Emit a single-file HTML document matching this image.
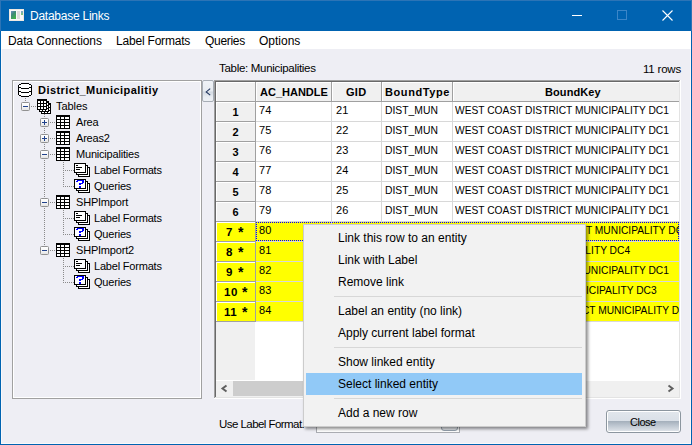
<!DOCTYPE html><html><head><meta charset="utf-8"><style>
*{margin:0;padding:0;box-sizing:border-box}
html,body{width:692px;height:445px;overflow:hidden;background:#EEEEF4;font-family:"Liberation Sans",sans-serif;color:#000;position:relative}
.a{position:absolute;white-space:nowrap}
.ln{position:absolute}
svg{position:absolute;overflow:visible}
</style></head><body>
<div class="ln" style="left:0px;top:0px;width:692px;height:31px;background:#0063B1;"></div>
<div class="ln" style="left:0px;top:0px;width:1px;height:445px;background:#0063B1;"></div>
<div class="ln" style="left:691px;top:0px;width:1px;height:445px;background:#0063B1;"></div>
<div class="ln" style="left:0px;top:444px;width:692px;height:1px;background:#0063B1;"></div>
<div class="ln" style="left:1px;top:31px;width:690px;height:18px;background:#FFFFFF;"></div>
<div class="ln" style="left:0px;top:0px;width:692px;height:1px;background:#2C74B6;"></div>
<div class="ln" style="left:0px;top:0px;width:1px;height:31px;background:#2C74B6;"></div>
<div class="ln" style="left:691px;top:0px;width:1px;height:31px;background:#2C74B6;"></div>
<div class="ln" style="left:1px;top:49px;width:1px;height:394px;background:#F9F8FA;"></div>
<div class="ln" style="left:690px;top:49px;width:1px;height:394px;background:#F9F8FA;"></div>
<div class="ln" style="left:1px;top:443px;width:690px;height:1px;background:#F9F8FA;"></div>
<svg style="left:9px;top:9px" width="15" height="12" viewBox="0 0 15 12">
<defs><linearGradient id="g1" x1="0" y1="0" x2="0.6" y2="1"><stop offset="0" stop-color="#6F8FC4"/><stop offset="0.45" stop-color="#3E8A78"/><stop offset="1" stop-color="#3DAF4A"/></linearGradient>
<linearGradient id="g2" x1="0" y1="0" x2="0" y2="1"><stop offset="0" stop-color="#7FA0D6"/><stop offset="1" stop-color="#7CCB6E"/></linearGradient></defs>
<rect x="0" y="0" width="15" height="12" fill="#EDE8E2"/>
<rect x="1" y="1" width="13" height="10" fill="#F8F8F8"/>
<rect x="2" y="2" width="5" height="8" fill="url(#g1)"/>
<rect x="8" y="2" width="3" height="8" fill="#DCDCDC"/>
<rect x="12" y="2" width="2" height="4" fill="url(#g2)"/>
</svg>
<div class="a" style="left:30px;top:10px;font-size:12px;line-height:12px;font-weight:400;letter-spacing:-0.25px;color:#fff;">Database Links</div>
<div class="ln" style="left:572px;top:15px;width:10px;height:1px;background:#fff;"></div>
<div class="ln" style="left:617px;top:10px;width:10px;height:10px;border:1px solid #3C86C8"></div>
<svg style="left:662px;top:10px" width="11" height="11" viewBox="0 0 11 11"><path d="M0.5 0.5L10.5 10.5M10.5 0.5L0.5 10.5" stroke="#fff" stroke-width="1.1"/></svg>
<div class="a" style="left:8px;top:35px;font-size:12px;line-height:12px;font-weight:400;letter-spacing:-0.1px;color:#000;">Data Connections</div>
<div class="a" style="left:116px;top:35px;font-size:12px;line-height:12px;font-weight:400;letter-spacing:-0.2px;color:#000;">Label Formats</div>
<div class="a" style="left:205px;top:35px;font-size:12px;line-height:12px;font-weight:400;letter-spacing:-0.3px;color:#000;">Queries</div>
<div class="a" style="left:259px;top:35px;font-size:12px;line-height:12px;font-weight:400;letter-spacing:0px;color:#000;">Options</div>
<div class="a" style="left:219px;top:63px;font-size:11.5px;line-height:11.5px;font-weight:400;letter-spacing:-0.3px;color:#000;">Table: Municipalities</div>
<div class="a" style="left:643px;top:64px;font-size:11.5px;line-height:11.5px;font-weight:400;letter-spacing:-0.2px;color:#000;">11 rows</div>
<div class="ln" style="left:12px;top:80px;width:190px;height:319px;border:1px solid #A0A0A0"></div>
<div class="ln" style="left:13px;top:81px;width:188px;height:317px;border:1px solid #FFFFFF"></div>
<div class="ln" style="left:25px;top:98px;width:1px;height:1px;background:#8A8A8A;"></div>
<div class="ln" style="left:25px;top:100px;width:1px;height:1px;background:#8A8A8A;"></div>
<div class="ln" style="left:31px;top:106px;width:1px;height:1px;background:#8A8A8A;"></div>
<div class="ln" style="left:33px;top:106px;width:1px;height:1px;background:#8A8A8A;"></div>
<div class="ln" style="left:35px;top:106px;width:1px;height:1px;background:#8A8A8A;"></div>
<div class="ln" style="left:44px;top:114px;width:1px;height:1px;background:#8A8A8A;"></div>
<div class="ln" style="left:44px;top:116px;width:1px;height:1px;background:#8A8A8A;"></div>
<div class="ln" style="left:44px;top:118px;width:1px;height:1px;background:#8A8A8A;"></div>
<div class="ln" style="left:44px;top:120px;width:1px;height:1px;background:#8A8A8A;"></div>
<div class="ln" style="left:44px;top:122px;width:1px;height:1px;background:#8A8A8A;"></div>
<div class="ln" style="left:44px;top:124px;width:1px;height:1px;background:#8A8A8A;"></div>
<div class="ln" style="left:44px;top:126px;width:1px;height:1px;background:#8A8A8A;"></div>
<div class="ln" style="left:44px;top:128px;width:1px;height:1px;background:#8A8A8A;"></div>
<div class="ln" style="left:44px;top:130px;width:1px;height:1px;background:#8A8A8A;"></div>
<div class="ln" style="left:44px;top:132px;width:1px;height:1px;background:#8A8A8A;"></div>
<div class="ln" style="left:44px;top:134px;width:1px;height:1px;background:#8A8A8A;"></div>
<div class="ln" style="left:44px;top:136px;width:1px;height:1px;background:#8A8A8A;"></div>
<div class="ln" style="left:44px;top:138px;width:1px;height:1px;background:#8A8A8A;"></div>
<div class="ln" style="left:44px;top:140px;width:1px;height:1px;background:#8A8A8A;"></div>
<div class="ln" style="left:44px;top:142px;width:1px;height:1px;background:#8A8A8A;"></div>
<div class="ln" style="left:44px;top:144px;width:1px;height:1px;background:#8A8A8A;"></div>
<div class="ln" style="left:44px;top:146px;width:1px;height:1px;background:#8A8A8A;"></div>
<div class="ln" style="left:44px;top:148px;width:1px;height:1px;background:#8A8A8A;"></div>
<div class="ln" style="left:44px;top:150px;width:1px;height:1px;background:#8A8A8A;"></div>
<div class="ln" style="left:44px;top:152px;width:1px;height:1px;background:#8A8A8A;"></div>
<div class="ln" style="left:44px;top:154px;width:1px;height:1px;background:#8A8A8A;"></div>
<div class="ln" style="left:44px;top:156px;width:1px;height:1px;background:#8A8A8A;"></div>
<div class="ln" style="left:44px;top:158px;width:1px;height:1px;background:#8A8A8A;"></div>
<div class="ln" style="left:44px;top:160px;width:1px;height:1px;background:#8A8A8A;"></div>
<div class="ln" style="left:44px;top:162px;width:1px;height:1px;background:#8A8A8A;"></div>
<div class="ln" style="left:44px;top:164px;width:1px;height:1px;background:#8A8A8A;"></div>
<div class="ln" style="left:44px;top:166px;width:1px;height:1px;background:#8A8A8A;"></div>
<div class="ln" style="left:44px;top:168px;width:1px;height:1px;background:#8A8A8A;"></div>
<div class="ln" style="left:44px;top:170px;width:1px;height:1px;background:#8A8A8A;"></div>
<div class="ln" style="left:44px;top:172px;width:1px;height:1px;background:#8A8A8A;"></div>
<div class="ln" style="left:44px;top:174px;width:1px;height:1px;background:#8A8A8A;"></div>
<div class="ln" style="left:44px;top:176px;width:1px;height:1px;background:#8A8A8A;"></div>
<div class="ln" style="left:44px;top:178px;width:1px;height:1px;background:#8A8A8A;"></div>
<div class="ln" style="left:44px;top:180px;width:1px;height:1px;background:#8A8A8A;"></div>
<div class="ln" style="left:44px;top:182px;width:1px;height:1px;background:#8A8A8A;"></div>
<div class="ln" style="left:44px;top:184px;width:1px;height:1px;background:#8A8A8A;"></div>
<div class="ln" style="left:44px;top:186px;width:1px;height:1px;background:#8A8A8A;"></div>
<div class="ln" style="left:44px;top:188px;width:1px;height:1px;background:#8A8A8A;"></div>
<div class="ln" style="left:44px;top:190px;width:1px;height:1px;background:#8A8A8A;"></div>
<div class="ln" style="left:44px;top:192px;width:1px;height:1px;background:#8A8A8A;"></div>
<div class="ln" style="left:44px;top:194px;width:1px;height:1px;background:#8A8A8A;"></div>
<div class="ln" style="left:44px;top:196px;width:1px;height:1px;background:#8A8A8A;"></div>
<div class="ln" style="left:44px;top:198px;width:1px;height:1px;background:#8A8A8A;"></div>
<div class="ln" style="left:44px;top:200px;width:1px;height:1px;background:#8A8A8A;"></div>
<div class="ln" style="left:44px;top:202px;width:1px;height:1px;background:#8A8A8A;"></div>
<div class="ln" style="left:44px;top:204px;width:1px;height:1px;background:#8A8A8A;"></div>
<div class="ln" style="left:44px;top:206px;width:1px;height:1px;background:#8A8A8A;"></div>
<div class="ln" style="left:44px;top:208px;width:1px;height:1px;background:#8A8A8A;"></div>
<div class="ln" style="left:44px;top:210px;width:1px;height:1px;background:#8A8A8A;"></div>
<div class="ln" style="left:44px;top:212px;width:1px;height:1px;background:#8A8A8A;"></div>
<div class="ln" style="left:44px;top:214px;width:1px;height:1px;background:#8A8A8A;"></div>
<div class="ln" style="left:44px;top:216px;width:1px;height:1px;background:#8A8A8A;"></div>
<div class="ln" style="left:44px;top:218px;width:1px;height:1px;background:#8A8A8A;"></div>
<div class="ln" style="left:44px;top:220px;width:1px;height:1px;background:#8A8A8A;"></div>
<div class="ln" style="left:44px;top:222px;width:1px;height:1px;background:#8A8A8A;"></div>
<div class="ln" style="left:44px;top:224px;width:1px;height:1px;background:#8A8A8A;"></div>
<div class="ln" style="left:44px;top:226px;width:1px;height:1px;background:#8A8A8A;"></div>
<div class="ln" style="left:44px;top:228px;width:1px;height:1px;background:#8A8A8A;"></div>
<div class="ln" style="left:44px;top:230px;width:1px;height:1px;background:#8A8A8A;"></div>
<div class="ln" style="left:44px;top:232px;width:1px;height:1px;background:#8A8A8A;"></div>
<div class="ln" style="left:44px;top:234px;width:1px;height:1px;background:#8A8A8A;"></div>
<div class="ln" style="left:44px;top:236px;width:1px;height:1px;background:#8A8A8A;"></div>
<div class="ln" style="left:44px;top:238px;width:1px;height:1px;background:#8A8A8A;"></div>
<div class="ln" style="left:44px;top:240px;width:1px;height:1px;background:#8A8A8A;"></div>
<div class="ln" style="left:44px;top:242px;width:1px;height:1px;background:#8A8A8A;"></div>
<div class="ln" style="left:44px;top:244px;width:1px;height:1px;background:#8A8A8A;"></div>
<div class="ln" style="left:50px;top:122px;width:1px;height:1px;background:#8A8A8A;"></div>
<div class="ln" style="left:52px;top:122px;width:1px;height:1px;background:#8A8A8A;"></div>
<div class="ln" style="left:54px;top:122px;width:1px;height:1px;background:#8A8A8A;"></div>
<div class="ln" style="left:50px;top:138px;width:1px;height:1px;background:#8A8A8A;"></div>
<div class="ln" style="left:52px;top:138px;width:1px;height:1px;background:#8A8A8A;"></div>
<div class="ln" style="left:54px;top:138px;width:1px;height:1px;background:#8A8A8A;"></div>
<div class="ln" style="left:50px;top:154px;width:1px;height:1px;background:#8A8A8A;"></div>
<div class="ln" style="left:52px;top:154px;width:1px;height:1px;background:#8A8A8A;"></div>
<div class="ln" style="left:54px;top:154px;width:1px;height:1px;background:#8A8A8A;"></div>
<div class="ln" style="left:50px;top:202px;width:1px;height:1px;background:#8A8A8A;"></div>
<div class="ln" style="left:52px;top:202px;width:1px;height:1px;background:#8A8A8A;"></div>
<div class="ln" style="left:54px;top:202px;width:1px;height:1px;background:#8A8A8A;"></div>
<div class="ln" style="left:50px;top:250px;width:1px;height:1px;background:#8A8A8A;"></div>
<div class="ln" style="left:52px;top:250px;width:1px;height:1px;background:#8A8A8A;"></div>
<div class="ln" style="left:54px;top:250px;width:1px;height:1px;background:#8A8A8A;"></div>
<div class="ln" style="left:63px;top:162px;width:1px;height:1px;background:#8A8A8A;"></div>
<div class="ln" style="left:63px;top:164px;width:1px;height:1px;background:#8A8A8A;"></div>
<div class="ln" style="left:63px;top:166px;width:1px;height:1px;background:#8A8A8A;"></div>
<div class="ln" style="left:63px;top:168px;width:1px;height:1px;background:#8A8A8A;"></div>
<div class="ln" style="left:63px;top:170px;width:1px;height:1px;background:#8A8A8A;"></div>
<div class="ln" style="left:63px;top:172px;width:1px;height:1px;background:#8A8A8A;"></div>
<div class="ln" style="left:63px;top:174px;width:1px;height:1px;background:#8A8A8A;"></div>
<div class="ln" style="left:63px;top:176px;width:1px;height:1px;background:#8A8A8A;"></div>
<div class="ln" style="left:63px;top:178px;width:1px;height:1px;background:#8A8A8A;"></div>
<div class="ln" style="left:63px;top:180px;width:1px;height:1px;background:#8A8A8A;"></div>
<div class="ln" style="left:63px;top:182px;width:1px;height:1px;background:#8A8A8A;"></div>
<div class="ln" style="left:63px;top:184px;width:1px;height:1px;background:#8A8A8A;"></div>
<div class="ln" style="left:63px;top:186px;width:1px;height:1px;background:#8A8A8A;"></div>
<div class="ln" style="left:65px;top:170px;width:1px;height:1px;background:#8A8A8A;"></div>
<div class="ln" style="left:65px;top:186px;width:1px;height:1px;background:#8A8A8A;"></div>
<div class="ln" style="left:67px;top:170px;width:1px;height:1px;background:#8A8A8A;"></div>
<div class="ln" style="left:67px;top:186px;width:1px;height:1px;background:#8A8A8A;"></div>
<div class="ln" style="left:69px;top:170px;width:1px;height:1px;background:#8A8A8A;"></div>
<div class="ln" style="left:69px;top:186px;width:1px;height:1px;background:#8A8A8A;"></div>
<div class="ln" style="left:71px;top:170px;width:1px;height:1px;background:#8A8A8A;"></div>
<div class="ln" style="left:71px;top:186px;width:1px;height:1px;background:#8A8A8A;"></div>
<div class="ln" style="left:73px;top:170px;width:1px;height:1px;background:#8A8A8A;"></div>
<div class="ln" style="left:73px;top:186px;width:1px;height:1px;background:#8A8A8A;"></div>
<div class="ln" style="left:63px;top:210px;width:1px;height:1px;background:#8A8A8A;"></div>
<div class="ln" style="left:63px;top:212px;width:1px;height:1px;background:#8A8A8A;"></div>
<div class="ln" style="left:63px;top:214px;width:1px;height:1px;background:#8A8A8A;"></div>
<div class="ln" style="left:63px;top:216px;width:1px;height:1px;background:#8A8A8A;"></div>
<div class="ln" style="left:63px;top:218px;width:1px;height:1px;background:#8A8A8A;"></div>
<div class="ln" style="left:63px;top:220px;width:1px;height:1px;background:#8A8A8A;"></div>
<div class="ln" style="left:63px;top:222px;width:1px;height:1px;background:#8A8A8A;"></div>
<div class="ln" style="left:63px;top:224px;width:1px;height:1px;background:#8A8A8A;"></div>
<div class="ln" style="left:63px;top:226px;width:1px;height:1px;background:#8A8A8A;"></div>
<div class="ln" style="left:63px;top:228px;width:1px;height:1px;background:#8A8A8A;"></div>
<div class="ln" style="left:63px;top:230px;width:1px;height:1px;background:#8A8A8A;"></div>
<div class="ln" style="left:63px;top:232px;width:1px;height:1px;background:#8A8A8A;"></div>
<div class="ln" style="left:63px;top:234px;width:1px;height:1px;background:#8A8A8A;"></div>
<div class="ln" style="left:65px;top:218px;width:1px;height:1px;background:#8A8A8A;"></div>
<div class="ln" style="left:65px;top:234px;width:1px;height:1px;background:#8A8A8A;"></div>
<div class="ln" style="left:67px;top:218px;width:1px;height:1px;background:#8A8A8A;"></div>
<div class="ln" style="left:67px;top:234px;width:1px;height:1px;background:#8A8A8A;"></div>
<div class="ln" style="left:69px;top:218px;width:1px;height:1px;background:#8A8A8A;"></div>
<div class="ln" style="left:69px;top:234px;width:1px;height:1px;background:#8A8A8A;"></div>
<div class="ln" style="left:71px;top:218px;width:1px;height:1px;background:#8A8A8A;"></div>
<div class="ln" style="left:71px;top:234px;width:1px;height:1px;background:#8A8A8A;"></div>
<div class="ln" style="left:73px;top:218px;width:1px;height:1px;background:#8A8A8A;"></div>
<div class="ln" style="left:73px;top:234px;width:1px;height:1px;background:#8A8A8A;"></div>
<div class="ln" style="left:63px;top:258px;width:1px;height:1px;background:#8A8A8A;"></div>
<div class="ln" style="left:63px;top:260px;width:1px;height:1px;background:#8A8A8A;"></div>
<div class="ln" style="left:63px;top:262px;width:1px;height:1px;background:#8A8A8A;"></div>
<div class="ln" style="left:63px;top:264px;width:1px;height:1px;background:#8A8A8A;"></div>
<div class="ln" style="left:63px;top:266px;width:1px;height:1px;background:#8A8A8A;"></div>
<div class="ln" style="left:63px;top:268px;width:1px;height:1px;background:#8A8A8A;"></div>
<div class="ln" style="left:63px;top:270px;width:1px;height:1px;background:#8A8A8A;"></div>
<div class="ln" style="left:63px;top:272px;width:1px;height:1px;background:#8A8A8A;"></div>
<div class="ln" style="left:63px;top:274px;width:1px;height:1px;background:#8A8A8A;"></div>
<div class="ln" style="left:63px;top:276px;width:1px;height:1px;background:#8A8A8A;"></div>
<div class="ln" style="left:63px;top:278px;width:1px;height:1px;background:#8A8A8A;"></div>
<div class="ln" style="left:63px;top:280px;width:1px;height:1px;background:#8A8A8A;"></div>
<div class="ln" style="left:63px;top:282px;width:1px;height:1px;background:#8A8A8A;"></div>
<div class="ln" style="left:65px;top:266px;width:1px;height:1px;background:#8A8A8A;"></div>
<div class="ln" style="left:65px;top:282px;width:1px;height:1px;background:#8A8A8A;"></div>
<div class="ln" style="left:67px;top:266px;width:1px;height:1px;background:#8A8A8A;"></div>
<div class="ln" style="left:67px;top:282px;width:1px;height:1px;background:#8A8A8A;"></div>
<div class="ln" style="left:69px;top:266px;width:1px;height:1px;background:#8A8A8A;"></div>
<div class="ln" style="left:69px;top:282px;width:1px;height:1px;background:#8A8A8A;"></div>
<div class="ln" style="left:71px;top:266px;width:1px;height:1px;background:#8A8A8A;"></div>
<div class="ln" style="left:71px;top:282px;width:1px;height:1px;background:#8A8A8A;"></div>
<div class="ln" style="left:73px;top:266px;width:1px;height:1px;background:#8A8A8A;"></div>
<div class="ln" style="left:73px;top:282px;width:1px;height:1px;background:#8A8A8A;"></div>
<svg style="left:18px;top:83px" width="14" height="14" viewBox="0 0 14 14" shape-rendering="crispEdges"><rect x="3" y="0" width="8" height="1" fill="#000000"/><rect x="1" y="1" width="2" height="1" fill="#000000"/><rect x="3" y="1" width="8" height="1" fill="#FFFFFF"/><rect x="11" y="1" width="2" height="1" fill="#000000"/><rect x="0" y="2" width="1" height="1" fill="#000000"/><rect x="1" y="2" width="12" height="1" fill="#FFFFFF"/><rect x="13" y="2" width="1" height="1" fill="#000000"/><rect x="0" y="3" width="1" height="1" fill="#000000"/><rect x="1" y="3" width="12" height="1" fill="#FFFFFF"/><rect x="13" y="3" width="1" height="1" fill="#000000"/><rect x="0" y="4" width="3" height="1" fill="#000000"/><rect x="3" y="4" width="8" height="1" fill="#FFFFFF"/><rect x="11" y="4" width="3" height="1" fill="#000000"/><rect x="0" y="5" width="1" height="1" fill="#000000"/><rect x="1" y="5" width="2" height="1" fill="#FFFFFF"/><rect x="3" y="5" width="8" height="1" fill="#000000"/><rect x="11" y="5" width="2" height="1" fill="#FFFFFF"/><rect x="13" y="5" width="1" height="1" fill="#000000"/><rect x="0" y="6" width="1" height="1" fill="#000000"/><rect x="1" y="6" width="12" height="1" fill="#FFFFFF"/><rect x="13" y="6" width="1" height="1" fill="#000000"/><rect x="0" y="7" width="1" height="1" fill="#000000"/><rect x="1" y="7" width="12" height="1" fill="#FFFFFF"/><rect x="13" y="7" width="1" height="1" fill="#000000"/><rect x="0" y="8" width="3" height="1" fill="#000000"/><rect x="3" y="8" width="8" height="1" fill="#FFFFFF"/><rect x="11" y="8" width="3" height="1" fill="#000000"/><rect x="0" y="9" width="1" height="1" fill="#000000"/><rect x="1" y="9" width="2" height="1" fill="#FFFFFF"/><rect x="3" y="9" width="8" height="1" fill="#000000"/><rect x="11" y="9" width="2" height="1" fill="#FFFFFF"/><rect x="13" y="9" width="1" height="1" fill="#000000"/><rect x="0" y="10" width="1" height="1" fill="#000000"/><rect x="1" y="10" width="12" height="1" fill="#FFFFFF"/><rect x="13" y="10" width="1" height="1" fill="#000000"/><rect x="0" y="11" width="1" height="1" fill="#000000"/><rect x="1" y="11" width="12" height="1" fill="#FFFFFF"/><rect x="13" y="11" width="1" height="1" fill="#000000"/><rect x="1" y="12" width="2" height="1" fill="#000000"/><rect x="3" y="12" width="8" height="1" fill="#FFFFFF"/><rect x="11" y="12" width="2" height="1" fill="#000000"/><rect x="3" y="13" width="8" height="1" fill="#000000"/></svg>
<div class="a" style="left:38px;top:85px;font-size:11px;line-height:11px;font-weight:700;letter-spacing:0.45px;color:#000;">District_Municipalitiy</div>
<div class="ln" style="left:21px;top:102px;width:9px;height:9px;border:1px solid #919191;border-radius:1.5px;background:linear-gradient(#FFFFFF 0%,#F7F7F7 50%,#E4E4E4 100%)"></div>
<div class="ln" style="left:23px;top:106px;width:5px;height:1px;background:#21428C;"></div>
<svg style="left:37px;top:99px" width="14" height="15" viewBox="0 0 14 15" shape-rendering="crispEdges"><rect x="0" y="0" width="10" height="1" fill="#000000"/><rect x="0" y="1" width="10" height="1" fill="#000000"/><rect x="0" y="2" width="1" height="1" fill="#000000"/><rect x="1" y="2" width="2" height="1" fill="#FFFFFF"/><rect x="3" y="2" width="1" height="1" fill="#000000"/><rect x="4" y="2" width="2" height="1" fill="#FFFFFF"/><rect x="6" y="2" width="1" height="1" fill="#000000"/><rect x="7" y="2" width="2" height="1" fill="#FFFFFF"/><rect x="9" y="2" width="3" height="1" fill="#000000"/><rect x="0" y="3" width="1" height="1" fill="#000000"/><rect x="1" y="3" width="2" height="1" fill="#FFFFFF"/><rect x="3" y="3" width="1" height="1" fill="#000000"/><rect x="4" y="3" width="2" height="1" fill="#FFFFFF"/><rect x="6" y="3" width="1" height="1" fill="#000000"/><rect x="7" y="3" width="2" height="1" fill="#FFFFFF"/><rect x="9" y="3" width="3" height="1" fill="#000000"/><rect x="0" y="4" width="10" height="1" fill="#000000"/><rect x="10" y="4" width="1" height="1" fill="#FFFFFF"/><rect x="11" y="4" width="3" height="1" fill="#000000"/><rect x="0" y="5" width="1" height="1" fill="#000000"/><rect x="1" y="5" width="2" height="1" fill="#FFFFFF"/><rect x="3" y="5" width="1" height="1" fill="#000000"/><rect x="4" y="5" width="2" height="1" fill="#FFFFFF"/><rect x="6" y="5" width="1" height="1" fill="#000000"/><rect x="7" y="5" width="2" height="1" fill="#FFFFFF"/><rect x="9" y="5" width="1" height="1" fill="#000000"/><rect x="10" y="5" width="1" height="1" fill="#FFFFFF"/><rect x="11" y="5" width="3" height="1" fill="#000000"/><rect x="0" y="6" width="1" height="1" fill="#000000"/><rect x="1" y="6" width="2" height="1" fill="#FFFFFF"/><rect x="3" y="6" width="1" height="1" fill="#000000"/><rect x="4" y="6" width="2" height="1" fill="#FFFFFF"/><rect x="6" y="6" width="1" height="1" fill="#000000"/><rect x="7" y="6" width="2" height="1" fill="#FFFFFF"/><rect x="9" y="6" width="3" height="1" fill="#000000"/><rect x="12" y="6" width="1" height="1" fill="#FFFFFF"/><rect x="13" y="6" width="1" height="1" fill="#000000"/><rect x="0" y="7" width="10" height="1" fill="#000000"/><rect x="10" y="7" width="1" height="1" fill="#FFFFFF"/><rect x="11" y="7" width="1" height="1" fill="#000000"/><rect x="12" y="7" width="1" height="1" fill="#FFFFFF"/><rect x="13" y="7" width="1" height="1" fill="#000000"/><rect x="0" y="8" width="1" height="1" fill="#000000"/><rect x="1" y="8" width="2" height="1" fill="#FFFFFF"/><rect x="3" y="8" width="1" height="1" fill="#000000"/><rect x="4" y="8" width="2" height="1" fill="#FFFFFF"/><rect x="6" y="8" width="1" height="1" fill="#000000"/><rect x="7" y="8" width="2" height="1" fill="#FFFFFF"/><rect x="9" y="8" width="1" height="1" fill="#000000"/><rect x="10" y="8" width="1" height="1" fill="#FFFFFF"/><rect x="11" y="8" width="3" height="1" fill="#000000"/><rect x="0" y="9" width="1" height="1" fill="#000000"/><rect x="1" y="9" width="2" height="1" fill="#FFFFFF"/><rect x="3" y="9" width="1" height="1" fill="#000000"/><rect x="4" y="9" width="2" height="1" fill="#FFFFFF"/><rect x="6" y="9" width="1" height="1" fill="#000000"/><rect x="7" y="9" width="2" height="1" fill="#FFFFFF"/><rect x="9" y="9" width="3" height="1" fill="#000000"/><rect x="12" y="9" width="1" height="1" fill="#FFFFFF"/><rect x="13" y="9" width="1" height="1" fill="#000000"/><rect x="0" y="10" width="10" height="1" fill="#000000"/><rect x="10" y="10" width="1" height="1" fill="#FFFFFF"/><rect x="11" y="10" width="1" height="1" fill="#000000"/><rect x="12" y="10" width="1" height="1" fill="#FFFFFF"/><rect x="13" y="10" width="1" height="1" fill="#000000"/><rect x="2" y="11" width="1" height="1" fill="#000000"/><rect x="3" y="11" width="2" height="1" fill="#FFFFFF"/><rect x="5" y="11" width="1" height="1" fill="#000000"/><rect x="6" y="11" width="2" height="1" fill="#FFFFFF"/><rect x="8" y="11" width="1" height="1" fill="#000000"/><rect x="9" y="11" width="2" height="1" fill="#FFFFFF"/><rect x="11" y="11" width="3" height="1" fill="#000000"/><rect x="2" y="12" width="10" height="1" fill="#000000"/><rect x="12" y="12" width="1" height="1" fill="#FFFFFF"/><rect x="13" y="12" width="1" height="1" fill="#000000"/><rect x="4" y="13" width="1" height="1" fill="#000000"/><rect x="5" y="13" width="2" height="1" fill="#FFFFFF"/><rect x="7" y="13" width="1" height="1" fill="#000000"/><rect x="8" y="13" width="2" height="1" fill="#FFFFFF"/><rect x="10" y="13" width="1" height="1" fill="#000000"/><rect x="11" y="13" width="2" height="1" fill="#FFFFFF"/><rect x="13" y="13" width="1" height="1" fill="#000000"/><rect x="4" y="14" width="10" height="1" fill="#000000"/></svg>
<div class="a" style="left:56px;top:101px;font-size:11px;line-height:11px;font-weight:400;letter-spacing:-0.05px;color:#000;">Tables</div>
<div class="ln" style="left:40px;top:118px;width:9px;height:9px;border:1px solid #919191;border-radius:1.5px;background:linear-gradient(#FFFFFF 0%,#F7F7F7 50%,#E4E4E4 100%)"></div>
<div class="ln" style="left:42px;top:122px;width:5px;height:1px;background:#21428C;"></div>
<div class="ln" style="left:44px;top:120px;width:1px;height:5px;background:#21428C;"></div>
<svg style="left:56px;top:115px" width="14" height="14" viewBox="0 0 14 14" shape-rendering="crispEdges"><rect x="0" y="0" width="14" height="1" fill="#000000"/><rect x="0" y="1" width="14" height="1" fill="#000000"/><rect x="0" y="2" width="1" height="1" fill="#000000"/><rect x="1" y="2" width="3" height="1" fill="#FFFFFF"/><rect x="4" y="2" width="1" height="1" fill="#000000"/><rect x="5" y="2" width="3" height="1" fill="#FFFFFF"/><rect x="8" y="2" width="1" height="1" fill="#000000"/><rect x="9" y="2" width="4" height="1" fill="#FFFFFF"/><rect x="13" y="2" width="1" height="1" fill="#000000"/><rect x="0" y="3" width="1" height="1" fill="#000000"/><rect x="1" y="3" width="3" height="1" fill="#FFFFFF"/><rect x="4" y="3" width="1" height="1" fill="#000000"/><rect x="5" y="3" width="3" height="1" fill="#FFFFFF"/><rect x="8" y="3" width="1" height="1" fill="#000000"/><rect x="9" y="3" width="4" height="1" fill="#FFFFFF"/><rect x="13" y="3" width="1" height="1" fill="#000000"/><rect x="0" y="4" width="14" height="1" fill="#000000"/><rect x="0" y="5" width="1" height="1" fill="#000000"/><rect x="1" y="5" width="3" height="1" fill="#FFFFFF"/><rect x="4" y="5" width="1" height="1" fill="#000000"/><rect x="5" y="5" width="3" height="1" fill="#FFFFFF"/><rect x="8" y="5" width="1" height="1" fill="#000000"/><rect x="9" y="5" width="4" height="1" fill="#FFFFFF"/><rect x="13" y="5" width="1" height="1" fill="#000000"/><rect x="0" y="6" width="1" height="1" fill="#000000"/><rect x="1" y="6" width="3" height="1" fill="#FFFFFF"/><rect x="4" y="6" width="1" height="1" fill="#000000"/><rect x="5" y="6" width="3" height="1" fill="#FFFFFF"/><rect x="8" y="6" width="1" height="1" fill="#000000"/><rect x="9" y="6" width="4" height="1" fill="#FFFFFF"/><rect x="13" y="6" width="1" height="1" fill="#000000"/><rect x="0" y="7" width="14" height="1" fill="#000000"/><rect x="0" y="8" width="1" height="1" fill="#000000"/><rect x="1" y="8" width="3" height="1" fill="#FFFFFF"/><rect x="4" y="8" width="1" height="1" fill="#000000"/><rect x="5" y="8" width="3" height="1" fill="#FFFFFF"/><rect x="8" y="8" width="1" height="1" fill="#000000"/><rect x="9" y="8" width="4" height="1" fill="#FFFFFF"/><rect x="13" y="8" width="1" height="1" fill="#000000"/><rect x="0" y="9" width="1" height="1" fill="#000000"/><rect x="1" y="9" width="3" height="1" fill="#FFFFFF"/><rect x="4" y="9" width="1" height="1" fill="#000000"/><rect x="5" y="9" width="3" height="1" fill="#FFFFFF"/><rect x="8" y="9" width="1" height="1" fill="#000000"/><rect x="9" y="9" width="4" height="1" fill="#FFFFFF"/><rect x="13" y="9" width="1" height="1" fill="#000000"/><rect x="0" y="10" width="14" height="1" fill="#000000"/><rect x="0" y="11" width="1" height="1" fill="#000000"/><rect x="1" y="11" width="3" height="1" fill="#FFFFFF"/><rect x="4" y="11" width="1" height="1" fill="#000000"/><rect x="5" y="11" width="3" height="1" fill="#FFFFFF"/><rect x="8" y="11" width="1" height="1" fill="#000000"/><rect x="9" y="11" width="4" height="1" fill="#FFFFFF"/><rect x="13" y="11" width="1" height="1" fill="#000000"/><rect x="0" y="12" width="1" height="1" fill="#000000"/><rect x="1" y="12" width="3" height="1" fill="#FFFFFF"/><rect x="4" y="12" width="1" height="1" fill="#000000"/><rect x="5" y="12" width="3" height="1" fill="#FFFFFF"/><rect x="8" y="12" width="1" height="1" fill="#000000"/><rect x="9" y="12" width="4" height="1" fill="#FFFFFF"/><rect x="13" y="12" width="1" height="1" fill="#000000"/><rect x="0" y="13" width="14" height="1" fill="#000000"/></svg>
<div class="a" style="left:76px;top:117px;font-size:11px;line-height:11px;font-weight:400;letter-spacing:-0.2px;color:#000;">Area</div>
<div class="ln" style="left:40px;top:134px;width:9px;height:9px;border:1px solid #919191;border-radius:1.5px;background:linear-gradient(#FFFFFF 0%,#F7F7F7 50%,#E4E4E4 100%)"></div>
<div class="ln" style="left:42px;top:138px;width:5px;height:1px;background:#21428C;"></div>
<div class="ln" style="left:44px;top:136px;width:1px;height:5px;background:#21428C;"></div>
<svg style="left:56px;top:131px" width="14" height="14" viewBox="0 0 14 14" shape-rendering="crispEdges"><rect x="0" y="0" width="14" height="1" fill="#000000"/><rect x="0" y="1" width="14" height="1" fill="#000000"/><rect x="0" y="2" width="1" height="1" fill="#000000"/><rect x="1" y="2" width="3" height="1" fill="#FFFFFF"/><rect x="4" y="2" width="1" height="1" fill="#000000"/><rect x="5" y="2" width="3" height="1" fill="#FFFFFF"/><rect x="8" y="2" width="1" height="1" fill="#000000"/><rect x="9" y="2" width="4" height="1" fill="#FFFFFF"/><rect x="13" y="2" width="1" height="1" fill="#000000"/><rect x="0" y="3" width="1" height="1" fill="#000000"/><rect x="1" y="3" width="3" height="1" fill="#FFFFFF"/><rect x="4" y="3" width="1" height="1" fill="#000000"/><rect x="5" y="3" width="3" height="1" fill="#FFFFFF"/><rect x="8" y="3" width="1" height="1" fill="#000000"/><rect x="9" y="3" width="4" height="1" fill="#FFFFFF"/><rect x="13" y="3" width="1" height="1" fill="#000000"/><rect x="0" y="4" width="14" height="1" fill="#000000"/><rect x="0" y="5" width="1" height="1" fill="#000000"/><rect x="1" y="5" width="3" height="1" fill="#FFFFFF"/><rect x="4" y="5" width="1" height="1" fill="#000000"/><rect x="5" y="5" width="3" height="1" fill="#FFFFFF"/><rect x="8" y="5" width="1" height="1" fill="#000000"/><rect x="9" y="5" width="4" height="1" fill="#FFFFFF"/><rect x="13" y="5" width="1" height="1" fill="#000000"/><rect x="0" y="6" width="1" height="1" fill="#000000"/><rect x="1" y="6" width="3" height="1" fill="#FFFFFF"/><rect x="4" y="6" width="1" height="1" fill="#000000"/><rect x="5" y="6" width="3" height="1" fill="#FFFFFF"/><rect x="8" y="6" width="1" height="1" fill="#000000"/><rect x="9" y="6" width="4" height="1" fill="#FFFFFF"/><rect x="13" y="6" width="1" height="1" fill="#000000"/><rect x="0" y="7" width="14" height="1" fill="#000000"/><rect x="0" y="8" width="1" height="1" fill="#000000"/><rect x="1" y="8" width="3" height="1" fill="#FFFFFF"/><rect x="4" y="8" width="1" height="1" fill="#000000"/><rect x="5" y="8" width="3" height="1" fill="#FFFFFF"/><rect x="8" y="8" width="1" height="1" fill="#000000"/><rect x="9" y="8" width="4" height="1" fill="#FFFFFF"/><rect x="13" y="8" width="1" height="1" fill="#000000"/><rect x="0" y="9" width="1" height="1" fill="#000000"/><rect x="1" y="9" width="3" height="1" fill="#FFFFFF"/><rect x="4" y="9" width="1" height="1" fill="#000000"/><rect x="5" y="9" width="3" height="1" fill="#FFFFFF"/><rect x="8" y="9" width="1" height="1" fill="#000000"/><rect x="9" y="9" width="4" height="1" fill="#FFFFFF"/><rect x="13" y="9" width="1" height="1" fill="#000000"/><rect x="0" y="10" width="14" height="1" fill="#000000"/><rect x="0" y="11" width="1" height="1" fill="#000000"/><rect x="1" y="11" width="3" height="1" fill="#FFFFFF"/><rect x="4" y="11" width="1" height="1" fill="#000000"/><rect x="5" y="11" width="3" height="1" fill="#FFFFFF"/><rect x="8" y="11" width="1" height="1" fill="#000000"/><rect x="9" y="11" width="4" height="1" fill="#FFFFFF"/><rect x="13" y="11" width="1" height="1" fill="#000000"/><rect x="0" y="12" width="1" height="1" fill="#000000"/><rect x="1" y="12" width="3" height="1" fill="#FFFFFF"/><rect x="4" y="12" width="1" height="1" fill="#000000"/><rect x="5" y="12" width="3" height="1" fill="#FFFFFF"/><rect x="8" y="12" width="1" height="1" fill="#000000"/><rect x="9" y="12" width="4" height="1" fill="#FFFFFF"/><rect x="13" y="12" width="1" height="1" fill="#000000"/><rect x="0" y="13" width="14" height="1" fill="#000000"/></svg>
<div class="a" style="left:76px;top:133px;font-size:11px;line-height:11px;font-weight:400;letter-spacing:-0.2px;color:#000;">Areas2</div>
<div class="ln" style="left:40px;top:150px;width:9px;height:9px;border:1px solid #919191;border-radius:1.5px;background:linear-gradient(#FFFFFF 0%,#F7F7F7 50%,#E4E4E4 100%)"></div>
<div class="ln" style="left:42px;top:154px;width:5px;height:1px;background:#21428C;"></div>
<svg style="left:56px;top:147px" width="14" height="14" viewBox="0 0 14 14" shape-rendering="crispEdges"><rect x="0" y="0" width="14" height="1" fill="#000000"/><rect x="0" y="1" width="14" height="1" fill="#000000"/><rect x="0" y="2" width="1" height="1" fill="#000000"/><rect x="1" y="2" width="3" height="1" fill="#FFFFFF"/><rect x="4" y="2" width="1" height="1" fill="#000000"/><rect x="5" y="2" width="3" height="1" fill="#FFFFFF"/><rect x="8" y="2" width="1" height="1" fill="#000000"/><rect x="9" y="2" width="4" height="1" fill="#FFFFFF"/><rect x="13" y="2" width="1" height="1" fill="#000000"/><rect x="0" y="3" width="1" height="1" fill="#000000"/><rect x="1" y="3" width="3" height="1" fill="#FFFFFF"/><rect x="4" y="3" width="1" height="1" fill="#000000"/><rect x="5" y="3" width="3" height="1" fill="#FFFFFF"/><rect x="8" y="3" width="1" height="1" fill="#000000"/><rect x="9" y="3" width="4" height="1" fill="#FFFFFF"/><rect x="13" y="3" width="1" height="1" fill="#000000"/><rect x="0" y="4" width="14" height="1" fill="#000000"/><rect x="0" y="5" width="1" height="1" fill="#000000"/><rect x="1" y="5" width="3" height="1" fill="#FFFFFF"/><rect x="4" y="5" width="1" height="1" fill="#000000"/><rect x="5" y="5" width="3" height="1" fill="#FFFFFF"/><rect x="8" y="5" width="1" height="1" fill="#000000"/><rect x="9" y="5" width="4" height="1" fill="#FFFFFF"/><rect x="13" y="5" width="1" height="1" fill="#000000"/><rect x="0" y="6" width="1" height="1" fill="#000000"/><rect x="1" y="6" width="3" height="1" fill="#FFFFFF"/><rect x="4" y="6" width="1" height="1" fill="#000000"/><rect x="5" y="6" width="3" height="1" fill="#FFFFFF"/><rect x="8" y="6" width="1" height="1" fill="#000000"/><rect x="9" y="6" width="4" height="1" fill="#FFFFFF"/><rect x="13" y="6" width="1" height="1" fill="#000000"/><rect x="0" y="7" width="14" height="1" fill="#000000"/><rect x="0" y="8" width="1" height="1" fill="#000000"/><rect x="1" y="8" width="3" height="1" fill="#FFFFFF"/><rect x="4" y="8" width="1" height="1" fill="#000000"/><rect x="5" y="8" width="3" height="1" fill="#FFFFFF"/><rect x="8" y="8" width="1" height="1" fill="#000000"/><rect x="9" y="8" width="4" height="1" fill="#FFFFFF"/><rect x="13" y="8" width="1" height="1" fill="#000000"/><rect x="0" y="9" width="1" height="1" fill="#000000"/><rect x="1" y="9" width="3" height="1" fill="#FFFFFF"/><rect x="4" y="9" width="1" height="1" fill="#000000"/><rect x="5" y="9" width="3" height="1" fill="#FFFFFF"/><rect x="8" y="9" width="1" height="1" fill="#000000"/><rect x="9" y="9" width="4" height="1" fill="#FFFFFF"/><rect x="13" y="9" width="1" height="1" fill="#000000"/><rect x="0" y="10" width="14" height="1" fill="#000000"/><rect x="0" y="11" width="1" height="1" fill="#000000"/><rect x="1" y="11" width="3" height="1" fill="#FFFFFF"/><rect x="4" y="11" width="1" height="1" fill="#000000"/><rect x="5" y="11" width="3" height="1" fill="#FFFFFF"/><rect x="8" y="11" width="1" height="1" fill="#000000"/><rect x="9" y="11" width="4" height="1" fill="#FFFFFF"/><rect x="13" y="11" width="1" height="1" fill="#000000"/><rect x="0" y="12" width="1" height="1" fill="#000000"/><rect x="1" y="12" width="3" height="1" fill="#FFFFFF"/><rect x="4" y="12" width="1" height="1" fill="#000000"/><rect x="5" y="12" width="3" height="1" fill="#FFFFFF"/><rect x="8" y="12" width="1" height="1" fill="#000000"/><rect x="9" y="12" width="4" height="1" fill="#FFFFFF"/><rect x="13" y="12" width="1" height="1" fill="#000000"/><rect x="0" y="13" width="14" height="1" fill="#000000"/></svg>
<div class="a" style="left:76px;top:149px;font-size:11px;line-height:11px;font-weight:400;letter-spacing:-0.2px;color:#000;">Municipalities</div>
<svg style="left:74px;top:163px" width="16" height="14" viewBox="0 0 16 14" shape-rendering="crispEdges"><rect x="0" y="0" width="12" height="1" fill="#000000"/><rect x="0" y="1" width="1" height="1" fill="#000000"/><rect x="1" y="1" width="10" height="1" fill="#FFFFFF"/><rect x="11" y="1" width="1" height="1" fill="#000000"/><rect x="0" y="2" width="1" height="1" fill="#000000"/><rect x="1" y="2" width="1" height="1" fill="#FFFFFF"/><rect x="2" y="2" width="2" height="1" fill="#000000"/><rect x="4" y="2" width="7" height="1" fill="#FFFFFF"/><rect x="11" y="2" width="3" height="1" fill="#000000"/><rect x="0" y="3" width="1" height="1" fill="#000000"/><rect x="1" y="3" width="10" height="1" fill="#FFFFFF"/><rect x="11" y="3" width="1" height="1" fill="#000000"/><rect x="12" y="3" width="1" height="1" fill="#FFFFFF"/><rect x="13" y="3" width="1" height="1" fill="#000000"/><rect x="0" y="4" width="1" height="1" fill="#000000"/><rect x="1" y="4" width="1" height="1" fill="#FFFFFF"/><rect x="2" y="4" width="6" height="1" fill="#000000"/><rect x="8" y="4" width="3" height="1" fill="#FFFFFF"/><rect x="11" y="4" width="1" height="1" fill="#000000"/><rect x="12" y="4" width="1" height="1" fill="#FFFFFF"/><rect x="13" y="4" width="3" height="1" fill="#000000"/><rect x="0" y="5" width="1" height="1" fill="#000000"/><rect x="1" y="5" width="10" height="1" fill="#FFFFFF"/><rect x="11" y="5" width="1" height="1" fill="#000000"/><rect x="12" y="5" width="1" height="1" fill="#FFFFFF"/><rect x="13" y="5" width="1" height="1" fill="#000000"/><rect x="14" y="5" width="1" height="1" fill="#FFFFFF"/><rect x="15" y="5" width="1" height="1" fill="#000000"/><rect x="0" y="6" width="1" height="1" fill="#000000"/><rect x="1" y="6" width="1" height="1" fill="#FFFFFF"/><rect x="2" y="6" width="4" height="1" fill="#000000"/><rect x="6" y="6" width="5" height="1" fill="#FFFFFF"/><rect x="11" y="6" width="1" height="1" fill="#000000"/><rect x="12" y="6" width="1" height="1" fill="#FFFFFF"/><rect x="13" y="6" width="1" height="1" fill="#000000"/><rect x="14" y="6" width="1" height="1" fill="#FFFFFF"/><rect x="15" y="6" width="1" height="1" fill="#000000"/><rect x="0" y="7" width="1" height="1" fill="#000000"/><rect x="1" y="7" width="10" height="1" fill="#FFFFFF"/><rect x="11" y="7" width="1" height="1" fill="#000000"/><rect x="12" y="7" width="1" height="1" fill="#FFFFFF"/><rect x="13" y="7" width="1" height="1" fill="#000000"/><rect x="14" y="7" width="1" height="1" fill="#FFFFFF"/><rect x="15" y="7" width="1" height="1" fill="#000000"/><rect x="0" y="8" width="1" height="1" fill="#000000"/><rect x="1" y="8" width="10" height="1" fill="#FFFFFF"/><rect x="11" y="8" width="1" height="1" fill="#000000"/><rect x="12" y="8" width="1" height="1" fill="#FFFFFF"/><rect x="13" y="8" width="1" height="1" fill="#000000"/><rect x="14" y="8" width="1" height="1" fill="#FFFFFF"/><rect x="15" y="8" width="1" height="1" fill="#000000"/><rect x="0" y="9" width="12" height="1" fill="#000000"/><rect x="12" y="9" width="1" height="1" fill="#FFFFFF"/><rect x="13" y="9" width="1" height="1" fill="#000000"/><rect x="14" y="9" width="1" height="1" fill="#FFFFFF"/><rect x="15" y="9" width="1" height="1" fill="#000000"/><rect x="2" y="10" width="1" height="1" fill="#000000"/><rect x="3" y="10" width="10" height="1" fill="#FFFFFF"/><rect x="13" y="10" width="1" height="1" fill="#000000"/><rect x="14" y="10" width="1" height="1" fill="#FFFFFF"/><rect x="15" y="10" width="1" height="1" fill="#000000"/><rect x="2" y="11" width="12" height="1" fill="#000000"/><rect x="14" y="11" width="1" height="1" fill="#FFFFFF"/><rect x="15" y="11" width="1" height="1" fill="#000000"/><rect x="4" y="12" width="1" height="1" fill="#000000"/><rect x="5" y="12" width="10" height="1" fill="#FFFFFF"/><rect x="15" y="12" width="1" height="1" fill="#000000"/><rect x="4" y="13" width="12" height="1" fill="#000000"/></svg>
<div class="a" style="left:94px;top:165px;font-size:11px;line-height:11px;font-weight:400;letter-spacing:-0.2px;color:#000;">Label Formats</div>
<svg style="left:74px;top:179px" width="16" height="14" viewBox="0 0 16 14" shape-rendering="crispEdges"><rect x="0" y="0" width="12" height="1" fill="#000000"/><rect x="0" y="1" width="1" height="1" fill="#000000"/><rect x="1" y="1" width="2" height="1" fill="#FFFFFF"/><rect x="3" y="1" width="7" height="1" fill="#0000FF"/><rect x="10" y="1" width="1" height="1" fill="#FFFFFF"/><rect x="11" y="1" width="1" height="1" fill="#000000"/><rect x="0" y="2" width="1" height="1" fill="#000000"/><rect x="1" y="2" width="1" height="1" fill="#FFFFFF"/><rect x="2" y="2" width="2" height="1" fill="#0000FF"/><rect x="4" y="2" width="4" height="1" fill="#FFFFFF"/><rect x="8" y="2" width="2" height="1" fill="#0000FF"/><rect x="10" y="2" width="1" height="1" fill="#FFFFFF"/><rect x="11" y="2" width="3" height="1" fill="#000000"/><rect x="0" y="3" width="1" height="1" fill="#000000"/><rect x="1" y="3" width="7" height="1" fill="#FFFFFF"/><rect x="8" y="3" width="2" height="1" fill="#0000FF"/><rect x="10" y="3" width="1" height="1" fill="#FFFFFF"/><rect x="11" y="3" width="1" height="1" fill="#000000"/><rect x="12" y="3" width="1" height="1" fill="#FFFFFF"/><rect x="13" y="3" width="1" height="1" fill="#000000"/><rect x="0" y="4" width="1" height="1" fill="#000000"/><rect x="1" y="4" width="4" height="1" fill="#FFFFFF"/><rect x="5" y="4" width="4" height="1" fill="#0000FF"/><rect x="9" y="4" width="2" height="1" fill="#FFFFFF"/><rect x="11" y="4" width="1" height="1" fill="#000000"/><rect x="12" y="4" width="1" height="1" fill="#FFFFFF"/><rect x="13" y="4" width="3" height="1" fill="#000000"/><rect x="0" y="5" width="1" height="1" fill="#000000"/><rect x="1" y="5" width="4" height="1" fill="#FFFFFF"/><rect x="5" y="5" width="2" height="1" fill="#0000FF"/><rect x="7" y="5" width="4" height="1" fill="#FFFFFF"/><rect x="11" y="5" width="1" height="1" fill="#000000"/><rect x="12" y="5" width="1" height="1" fill="#FFFFFF"/><rect x="13" y="5" width="1" height="1" fill="#000000"/><rect x="14" y="5" width="1" height="1" fill="#FFFFFF"/><rect x="15" y="5" width="1" height="1" fill="#000000"/><rect x="0" y="6" width="1" height="1" fill="#000000"/><rect x="1" y="6" width="10" height="1" fill="#FFFFFF"/><rect x="11" y="6" width="1" height="1" fill="#000000"/><rect x="12" y="6" width="1" height="1" fill="#FFFFFF"/><rect x="13" y="6" width="1" height="1" fill="#000000"/><rect x="14" y="6" width="1" height="1" fill="#FFFFFF"/><rect x="15" y="6" width="1" height="1" fill="#000000"/><rect x="0" y="7" width="1" height="1" fill="#000000"/><rect x="1" y="7" width="4" height="1" fill="#FFFFFF"/><rect x="5" y="7" width="2" height="1" fill="#0000FF"/><rect x="7" y="7" width="4" height="1" fill="#FFFFFF"/><rect x="11" y="7" width="1" height="1" fill="#000000"/><rect x="12" y="7" width="1" height="1" fill="#FFFFFF"/><rect x="13" y="7" width="1" height="1" fill="#000000"/><rect x="14" y="7" width="1" height="1" fill="#FFFFFF"/><rect x="15" y="7" width="1" height="1" fill="#000000"/><rect x="0" y="8" width="1" height="1" fill="#000000"/><rect x="1" y="8" width="4" height="1" fill="#FFFFFF"/><rect x="5" y="8" width="2" height="1" fill="#0000FF"/><rect x="7" y="8" width="4" height="1" fill="#FFFFFF"/><rect x="11" y="8" width="1" height="1" fill="#000000"/><rect x="12" y="8" width="1" height="1" fill="#FFFFFF"/><rect x="13" y="8" width="1" height="1" fill="#000000"/><rect x="14" y="8" width="1" height="1" fill="#FFFFFF"/><rect x="15" y="8" width="1" height="1" fill="#000000"/><rect x="0" y="9" width="12" height="1" fill="#000000"/><rect x="12" y="9" width="1" height="1" fill="#FFFFFF"/><rect x="13" y="9" width="1" height="1" fill="#000000"/><rect x="14" y="9" width="1" height="1" fill="#FFFFFF"/><rect x="15" y="9" width="1" height="1" fill="#000000"/><rect x="2" y="10" width="1" height="1" fill="#000000"/><rect x="3" y="10" width="10" height="1" fill="#FFFFFF"/><rect x="13" y="10" width="1" height="1" fill="#000000"/><rect x="14" y="10" width="1" height="1" fill="#FFFFFF"/><rect x="15" y="10" width="1" height="1" fill="#000000"/><rect x="2" y="11" width="12" height="1" fill="#000000"/><rect x="14" y="11" width="1" height="1" fill="#FFFFFF"/><rect x="15" y="11" width="1" height="1" fill="#000000"/><rect x="4" y="12" width="1" height="1" fill="#000000"/><rect x="5" y="12" width="10" height="1" fill="#FFFFFF"/><rect x="15" y="12" width="1" height="1" fill="#000000"/><rect x="4" y="13" width="12" height="1" fill="#000000"/></svg>
<div class="a" style="left:94px;top:181px;font-size:11px;line-height:11px;font-weight:400;letter-spacing:-0.2px;color:#000;">Queries</div>
<div class="ln" style="left:40px;top:198px;width:9px;height:9px;border:1px solid #919191;border-radius:1.5px;background:linear-gradient(#FFFFFF 0%,#F7F7F7 50%,#E4E4E4 100%)"></div>
<div class="ln" style="left:42px;top:202px;width:5px;height:1px;background:#21428C;"></div>
<svg style="left:56px;top:195px" width="14" height="14" viewBox="0 0 14 14" shape-rendering="crispEdges"><rect x="0" y="0" width="14" height="1" fill="#000000"/><rect x="0" y="1" width="14" height="1" fill="#000000"/><rect x="0" y="2" width="1" height="1" fill="#000000"/><rect x="1" y="2" width="3" height="1" fill="#FFFFFF"/><rect x="4" y="2" width="1" height="1" fill="#000000"/><rect x="5" y="2" width="3" height="1" fill="#FFFFFF"/><rect x="8" y="2" width="1" height="1" fill="#000000"/><rect x="9" y="2" width="4" height="1" fill="#FFFFFF"/><rect x="13" y="2" width="1" height="1" fill="#000000"/><rect x="0" y="3" width="1" height="1" fill="#000000"/><rect x="1" y="3" width="3" height="1" fill="#FFFFFF"/><rect x="4" y="3" width="1" height="1" fill="#000000"/><rect x="5" y="3" width="3" height="1" fill="#FFFFFF"/><rect x="8" y="3" width="1" height="1" fill="#000000"/><rect x="9" y="3" width="4" height="1" fill="#FFFFFF"/><rect x="13" y="3" width="1" height="1" fill="#000000"/><rect x="0" y="4" width="14" height="1" fill="#000000"/><rect x="0" y="5" width="1" height="1" fill="#000000"/><rect x="1" y="5" width="3" height="1" fill="#FFFFFF"/><rect x="4" y="5" width="1" height="1" fill="#000000"/><rect x="5" y="5" width="3" height="1" fill="#FFFFFF"/><rect x="8" y="5" width="1" height="1" fill="#000000"/><rect x="9" y="5" width="4" height="1" fill="#FFFFFF"/><rect x="13" y="5" width="1" height="1" fill="#000000"/><rect x="0" y="6" width="1" height="1" fill="#000000"/><rect x="1" y="6" width="3" height="1" fill="#FFFFFF"/><rect x="4" y="6" width="1" height="1" fill="#000000"/><rect x="5" y="6" width="3" height="1" fill="#FFFFFF"/><rect x="8" y="6" width="1" height="1" fill="#000000"/><rect x="9" y="6" width="4" height="1" fill="#FFFFFF"/><rect x="13" y="6" width="1" height="1" fill="#000000"/><rect x="0" y="7" width="14" height="1" fill="#000000"/><rect x="0" y="8" width="1" height="1" fill="#000000"/><rect x="1" y="8" width="3" height="1" fill="#FFFFFF"/><rect x="4" y="8" width="1" height="1" fill="#000000"/><rect x="5" y="8" width="3" height="1" fill="#FFFFFF"/><rect x="8" y="8" width="1" height="1" fill="#000000"/><rect x="9" y="8" width="4" height="1" fill="#FFFFFF"/><rect x="13" y="8" width="1" height="1" fill="#000000"/><rect x="0" y="9" width="1" height="1" fill="#000000"/><rect x="1" y="9" width="3" height="1" fill="#FFFFFF"/><rect x="4" y="9" width="1" height="1" fill="#000000"/><rect x="5" y="9" width="3" height="1" fill="#FFFFFF"/><rect x="8" y="9" width="1" height="1" fill="#000000"/><rect x="9" y="9" width="4" height="1" fill="#FFFFFF"/><rect x="13" y="9" width="1" height="1" fill="#000000"/><rect x="0" y="10" width="14" height="1" fill="#000000"/><rect x="0" y="11" width="1" height="1" fill="#000000"/><rect x="1" y="11" width="3" height="1" fill="#FFFFFF"/><rect x="4" y="11" width="1" height="1" fill="#000000"/><rect x="5" y="11" width="3" height="1" fill="#FFFFFF"/><rect x="8" y="11" width="1" height="1" fill="#000000"/><rect x="9" y="11" width="4" height="1" fill="#FFFFFF"/><rect x="13" y="11" width="1" height="1" fill="#000000"/><rect x="0" y="12" width="1" height="1" fill="#000000"/><rect x="1" y="12" width="3" height="1" fill="#FFFFFF"/><rect x="4" y="12" width="1" height="1" fill="#000000"/><rect x="5" y="12" width="3" height="1" fill="#FFFFFF"/><rect x="8" y="12" width="1" height="1" fill="#000000"/><rect x="9" y="12" width="4" height="1" fill="#FFFFFF"/><rect x="13" y="12" width="1" height="1" fill="#000000"/><rect x="0" y="13" width="14" height="1" fill="#000000"/></svg>
<div class="a" style="left:76px;top:197px;font-size:11px;line-height:11px;font-weight:400;letter-spacing:-0.2px;color:#000;">SHPImport</div>
<svg style="left:74px;top:211px" width="16" height="14" viewBox="0 0 16 14" shape-rendering="crispEdges"><rect x="0" y="0" width="12" height="1" fill="#000000"/><rect x="0" y="1" width="1" height="1" fill="#000000"/><rect x="1" y="1" width="10" height="1" fill="#FFFFFF"/><rect x="11" y="1" width="1" height="1" fill="#000000"/><rect x="0" y="2" width="1" height="1" fill="#000000"/><rect x="1" y="2" width="1" height="1" fill="#FFFFFF"/><rect x="2" y="2" width="2" height="1" fill="#000000"/><rect x="4" y="2" width="7" height="1" fill="#FFFFFF"/><rect x="11" y="2" width="3" height="1" fill="#000000"/><rect x="0" y="3" width="1" height="1" fill="#000000"/><rect x="1" y="3" width="10" height="1" fill="#FFFFFF"/><rect x="11" y="3" width="1" height="1" fill="#000000"/><rect x="12" y="3" width="1" height="1" fill="#FFFFFF"/><rect x="13" y="3" width="1" height="1" fill="#000000"/><rect x="0" y="4" width="1" height="1" fill="#000000"/><rect x="1" y="4" width="1" height="1" fill="#FFFFFF"/><rect x="2" y="4" width="6" height="1" fill="#000000"/><rect x="8" y="4" width="3" height="1" fill="#FFFFFF"/><rect x="11" y="4" width="1" height="1" fill="#000000"/><rect x="12" y="4" width="1" height="1" fill="#FFFFFF"/><rect x="13" y="4" width="3" height="1" fill="#000000"/><rect x="0" y="5" width="1" height="1" fill="#000000"/><rect x="1" y="5" width="10" height="1" fill="#FFFFFF"/><rect x="11" y="5" width="1" height="1" fill="#000000"/><rect x="12" y="5" width="1" height="1" fill="#FFFFFF"/><rect x="13" y="5" width="1" height="1" fill="#000000"/><rect x="14" y="5" width="1" height="1" fill="#FFFFFF"/><rect x="15" y="5" width="1" height="1" fill="#000000"/><rect x="0" y="6" width="1" height="1" fill="#000000"/><rect x="1" y="6" width="1" height="1" fill="#FFFFFF"/><rect x="2" y="6" width="4" height="1" fill="#000000"/><rect x="6" y="6" width="5" height="1" fill="#FFFFFF"/><rect x="11" y="6" width="1" height="1" fill="#000000"/><rect x="12" y="6" width="1" height="1" fill="#FFFFFF"/><rect x="13" y="6" width="1" height="1" fill="#000000"/><rect x="14" y="6" width="1" height="1" fill="#FFFFFF"/><rect x="15" y="6" width="1" height="1" fill="#000000"/><rect x="0" y="7" width="1" height="1" fill="#000000"/><rect x="1" y="7" width="10" height="1" fill="#FFFFFF"/><rect x="11" y="7" width="1" height="1" fill="#000000"/><rect x="12" y="7" width="1" height="1" fill="#FFFFFF"/><rect x="13" y="7" width="1" height="1" fill="#000000"/><rect x="14" y="7" width="1" height="1" fill="#FFFFFF"/><rect x="15" y="7" width="1" height="1" fill="#000000"/><rect x="0" y="8" width="1" height="1" fill="#000000"/><rect x="1" y="8" width="10" height="1" fill="#FFFFFF"/><rect x="11" y="8" width="1" height="1" fill="#000000"/><rect x="12" y="8" width="1" height="1" fill="#FFFFFF"/><rect x="13" y="8" width="1" height="1" fill="#000000"/><rect x="14" y="8" width="1" height="1" fill="#FFFFFF"/><rect x="15" y="8" width="1" height="1" fill="#000000"/><rect x="0" y="9" width="12" height="1" fill="#000000"/><rect x="12" y="9" width="1" height="1" fill="#FFFFFF"/><rect x="13" y="9" width="1" height="1" fill="#000000"/><rect x="14" y="9" width="1" height="1" fill="#FFFFFF"/><rect x="15" y="9" width="1" height="1" fill="#000000"/><rect x="2" y="10" width="1" height="1" fill="#000000"/><rect x="3" y="10" width="10" height="1" fill="#FFFFFF"/><rect x="13" y="10" width="1" height="1" fill="#000000"/><rect x="14" y="10" width="1" height="1" fill="#FFFFFF"/><rect x="15" y="10" width="1" height="1" fill="#000000"/><rect x="2" y="11" width="12" height="1" fill="#000000"/><rect x="14" y="11" width="1" height="1" fill="#FFFFFF"/><rect x="15" y="11" width="1" height="1" fill="#000000"/><rect x="4" y="12" width="1" height="1" fill="#000000"/><rect x="5" y="12" width="10" height="1" fill="#FFFFFF"/><rect x="15" y="12" width="1" height="1" fill="#000000"/><rect x="4" y="13" width="12" height="1" fill="#000000"/></svg>
<div class="a" style="left:94px;top:213px;font-size:11px;line-height:11px;font-weight:400;letter-spacing:-0.2px;color:#000;">Label Formats</div>
<svg style="left:74px;top:227px" width="16" height="14" viewBox="0 0 16 14" shape-rendering="crispEdges"><rect x="0" y="0" width="12" height="1" fill="#000000"/><rect x="0" y="1" width="1" height="1" fill="#000000"/><rect x="1" y="1" width="2" height="1" fill="#FFFFFF"/><rect x="3" y="1" width="7" height="1" fill="#0000FF"/><rect x="10" y="1" width="1" height="1" fill="#FFFFFF"/><rect x="11" y="1" width="1" height="1" fill="#000000"/><rect x="0" y="2" width="1" height="1" fill="#000000"/><rect x="1" y="2" width="1" height="1" fill="#FFFFFF"/><rect x="2" y="2" width="2" height="1" fill="#0000FF"/><rect x="4" y="2" width="4" height="1" fill="#FFFFFF"/><rect x="8" y="2" width="2" height="1" fill="#0000FF"/><rect x="10" y="2" width="1" height="1" fill="#FFFFFF"/><rect x="11" y="2" width="3" height="1" fill="#000000"/><rect x="0" y="3" width="1" height="1" fill="#000000"/><rect x="1" y="3" width="7" height="1" fill="#FFFFFF"/><rect x="8" y="3" width="2" height="1" fill="#0000FF"/><rect x="10" y="3" width="1" height="1" fill="#FFFFFF"/><rect x="11" y="3" width="1" height="1" fill="#000000"/><rect x="12" y="3" width="1" height="1" fill="#FFFFFF"/><rect x="13" y="3" width="1" height="1" fill="#000000"/><rect x="0" y="4" width="1" height="1" fill="#000000"/><rect x="1" y="4" width="4" height="1" fill="#FFFFFF"/><rect x="5" y="4" width="4" height="1" fill="#0000FF"/><rect x="9" y="4" width="2" height="1" fill="#FFFFFF"/><rect x="11" y="4" width="1" height="1" fill="#000000"/><rect x="12" y="4" width="1" height="1" fill="#FFFFFF"/><rect x="13" y="4" width="3" height="1" fill="#000000"/><rect x="0" y="5" width="1" height="1" fill="#000000"/><rect x="1" y="5" width="4" height="1" fill="#FFFFFF"/><rect x="5" y="5" width="2" height="1" fill="#0000FF"/><rect x="7" y="5" width="4" height="1" fill="#FFFFFF"/><rect x="11" y="5" width="1" height="1" fill="#000000"/><rect x="12" y="5" width="1" height="1" fill="#FFFFFF"/><rect x="13" y="5" width="1" height="1" fill="#000000"/><rect x="14" y="5" width="1" height="1" fill="#FFFFFF"/><rect x="15" y="5" width="1" height="1" fill="#000000"/><rect x="0" y="6" width="1" height="1" fill="#000000"/><rect x="1" y="6" width="10" height="1" fill="#FFFFFF"/><rect x="11" y="6" width="1" height="1" fill="#000000"/><rect x="12" y="6" width="1" height="1" fill="#FFFFFF"/><rect x="13" y="6" width="1" height="1" fill="#000000"/><rect x="14" y="6" width="1" height="1" fill="#FFFFFF"/><rect x="15" y="6" width="1" height="1" fill="#000000"/><rect x="0" y="7" width="1" height="1" fill="#000000"/><rect x="1" y="7" width="4" height="1" fill="#FFFFFF"/><rect x="5" y="7" width="2" height="1" fill="#0000FF"/><rect x="7" y="7" width="4" height="1" fill="#FFFFFF"/><rect x="11" y="7" width="1" height="1" fill="#000000"/><rect x="12" y="7" width="1" height="1" fill="#FFFFFF"/><rect x="13" y="7" width="1" height="1" fill="#000000"/><rect x="14" y="7" width="1" height="1" fill="#FFFFFF"/><rect x="15" y="7" width="1" height="1" fill="#000000"/><rect x="0" y="8" width="1" height="1" fill="#000000"/><rect x="1" y="8" width="4" height="1" fill="#FFFFFF"/><rect x="5" y="8" width="2" height="1" fill="#0000FF"/><rect x="7" y="8" width="4" height="1" fill="#FFFFFF"/><rect x="11" y="8" width="1" height="1" fill="#000000"/><rect x="12" y="8" width="1" height="1" fill="#FFFFFF"/><rect x="13" y="8" width="1" height="1" fill="#000000"/><rect x="14" y="8" width="1" height="1" fill="#FFFFFF"/><rect x="15" y="8" width="1" height="1" fill="#000000"/><rect x="0" y="9" width="12" height="1" fill="#000000"/><rect x="12" y="9" width="1" height="1" fill="#FFFFFF"/><rect x="13" y="9" width="1" height="1" fill="#000000"/><rect x="14" y="9" width="1" height="1" fill="#FFFFFF"/><rect x="15" y="9" width="1" height="1" fill="#000000"/><rect x="2" y="10" width="1" height="1" fill="#000000"/><rect x="3" y="10" width="10" height="1" fill="#FFFFFF"/><rect x="13" y="10" width="1" height="1" fill="#000000"/><rect x="14" y="10" width="1" height="1" fill="#FFFFFF"/><rect x="15" y="10" width="1" height="1" fill="#000000"/><rect x="2" y="11" width="12" height="1" fill="#000000"/><rect x="14" y="11" width="1" height="1" fill="#FFFFFF"/><rect x="15" y="11" width="1" height="1" fill="#000000"/><rect x="4" y="12" width="1" height="1" fill="#000000"/><rect x="5" y="12" width="10" height="1" fill="#FFFFFF"/><rect x="15" y="12" width="1" height="1" fill="#000000"/><rect x="4" y="13" width="12" height="1" fill="#000000"/></svg>
<div class="a" style="left:94px;top:229px;font-size:11px;line-height:11px;font-weight:400;letter-spacing:-0.2px;color:#000;">Queries</div>
<div class="ln" style="left:40px;top:246px;width:9px;height:9px;border:1px solid #919191;border-radius:1.5px;background:linear-gradient(#FFFFFF 0%,#F7F7F7 50%,#E4E4E4 100%)"></div>
<div class="ln" style="left:42px;top:250px;width:5px;height:1px;background:#21428C;"></div>
<svg style="left:56px;top:243px" width="14" height="14" viewBox="0 0 14 14" shape-rendering="crispEdges"><rect x="0" y="0" width="14" height="1" fill="#000000"/><rect x="0" y="1" width="14" height="1" fill="#000000"/><rect x="0" y="2" width="1" height="1" fill="#000000"/><rect x="1" y="2" width="3" height="1" fill="#FFFFFF"/><rect x="4" y="2" width="1" height="1" fill="#000000"/><rect x="5" y="2" width="3" height="1" fill="#FFFFFF"/><rect x="8" y="2" width="1" height="1" fill="#000000"/><rect x="9" y="2" width="4" height="1" fill="#FFFFFF"/><rect x="13" y="2" width="1" height="1" fill="#000000"/><rect x="0" y="3" width="1" height="1" fill="#000000"/><rect x="1" y="3" width="3" height="1" fill="#FFFFFF"/><rect x="4" y="3" width="1" height="1" fill="#000000"/><rect x="5" y="3" width="3" height="1" fill="#FFFFFF"/><rect x="8" y="3" width="1" height="1" fill="#000000"/><rect x="9" y="3" width="4" height="1" fill="#FFFFFF"/><rect x="13" y="3" width="1" height="1" fill="#000000"/><rect x="0" y="4" width="14" height="1" fill="#000000"/><rect x="0" y="5" width="1" height="1" fill="#000000"/><rect x="1" y="5" width="3" height="1" fill="#FFFFFF"/><rect x="4" y="5" width="1" height="1" fill="#000000"/><rect x="5" y="5" width="3" height="1" fill="#FFFFFF"/><rect x="8" y="5" width="1" height="1" fill="#000000"/><rect x="9" y="5" width="4" height="1" fill="#FFFFFF"/><rect x="13" y="5" width="1" height="1" fill="#000000"/><rect x="0" y="6" width="1" height="1" fill="#000000"/><rect x="1" y="6" width="3" height="1" fill="#FFFFFF"/><rect x="4" y="6" width="1" height="1" fill="#000000"/><rect x="5" y="6" width="3" height="1" fill="#FFFFFF"/><rect x="8" y="6" width="1" height="1" fill="#000000"/><rect x="9" y="6" width="4" height="1" fill="#FFFFFF"/><rect x="13" y="6" width="1" height="1" fill="#000000"/><rect x="0" y="7" width="14" height="1" fill="#000000"/><rect x="0" y="8" width="1" height="1" fill="#000000"/><rect x="1" y="8" width="3" height="1" fill="#FFFFFF"/><rect x="4" y="8" width="1" height="1" fill="#000000"/><rect x="5" y="8" width="3" height="1" fill="#FFFFFF"/><rect x="8" y="8" width="1" height="1" fill="#000000"/><rect x="9" y="8" width="4" height="1" fill="#FFFFFF"/><rect x="13" y="8" width="1" height="1" fill="#000000"/><rect x="0" y="9" width="1" height="1" fill="#000000"/><rect x="1" y="9" width="3" height="1" fill="#FFFFFF"/><rect x="4" y="9" width="1" height="1" fill="#000000"/><rect x="5" y="9" width="3" height="1" fill="#FFFFFF"/><rect x="8" y="9" width="1" height="1" fill="#000000"/><rect x="9" y="9" width="4" height="1" fill="#FFFFFF"/><rect x="13" y="9" width="1" height="1" fill="#000000"/><rect x="0" y="10" width="14" height="1" fill="#000000"/><rect x="0" y="11" width="1" height="1" fill="#000000"/><rect x="1" y="11" width="3" height="1" fill="#FFFFFF"/><rect x="4" y="11" width="1" height="1" fill="#000000"/><rect x="5" y="11" width="3" height="1" fill="#FFFFFF"/><rect x="8" y="11" width="1" height="1" fill="#000000"/><rect x="9" y="11" width="4" height="1" fill="#FFFFFF"/><rect x="13" y="11" width="1" height="1" fill="#000000"/><rect x="0" y="12" width="1" height="1" fill="#000000"/><rect x="1" y="12" width="3" height="1" fill="#FFFFFF"/><rect x="4" y="12" width="1" height="1" fill="#000000"/><rect x="5" y="12" width="3" height="1" fill="#FFFFFF"/><rect x="8" y="12" width="1" height="1" fill="#000000"/><rect x="9" y="12" width="4" height="1" fill="#FFFFFF"/><rect x="13" y="12" width="1" height="1" fill="#000000"/><rect x="0" y="13" width="14" height="1" fill="#000000"/></svg>
<div class="a" style="left:76px;top:245px;font-size:11px;line-height:11px;font-weight:400;letter-spacing:-0.2px;color:#000;">SHPImport2</div>
<svg style="left:74px;top:259px" width="16" height="14" viewBox="0 0 16 14" shape-rendering="crispEdges"><rect x="0" y="0" width="12" height="1" fill="#000000"/><rect x="0" y="1" width="1" height="1" fill="#000000"/><rect x="1" y="1" width="10" height="1" fill="#FFFFFF"/><rect x="11" y="1" width="1" height="1" fill="#000000"/><rect x="0" y="2" width="1" height="1" fill="#000000"/><rect x="1" y="2" width="1" height="1" fill="#FFFFFF"/><rect x="2" y="2" width="2" height="1" fill="#000000"/><rect x="4" y="2" width="7" height="1" fill="#FFFFFF"/><rect x="11" y="2" width="3" height="1" fill="#000000"/><rect x="0" y="3" width="1" height="1" fill="#000000"/><rect x="1" y="3" width="10" height="1" fill="#FFFFFF"/><rect x="11" y="3" width="1" height="1" fill="#000000"/><rect x="12" y="3" width="1" height="1" fill="#FFFFFF"/><rect x="13" y="3" width="1" height="1" fill="#000000"/><rect x="0" y="4" width="1" height="1" fill="#000000"/><rect x="1" y="4" width="1" height="1" fill="#FFFFFF"/><rect x="2" y="4" width="6" height="1" fill="#000000"/><rect x="8" y="4" width="3" height="1" fill="#FFFFFF"/><rect x="11" y="4" width="1" height="1" fill="#000000"/><rect x="12" y="4" width="1" height="1" fill="#FFFFFF"/><rect x="13" y="4" width="3" height="1" fill="#000000"/><rect x="0" y="5" width="1" height="1" fill="#000000"/><rect x="1" y="5" width="10" height="1" fill="#FFFFFF"/><rect x="11" y="5" width="1" height="1" fill="#000000"/><rect x="12" y="5" width="1" height="1" fill="#FFFFFF"/><rect x="13" y="5" width="1" height="1" fill="#000000"/><rect x="14" y="5" width="1" height="1" fill="#FFFFFF"/><rect x="15" y="5" width="1" height="1" fill="#000000"/><rect x="0" y="6" width="1" height="1" fill="#000000"/><rect x="1" y="6" width="1" height="1" fill="#FFFFFF"/><rect x="2" y="6" width="4" height="1" fill="#000000"/><rect x="6" y="6" width="5" height="1" fill="#FFFFFF"/><rect x="11" y="6" width="1" height="1" fill="#000000"/><rect x="12" y="6" width="1" height="1" fill="#FFFFFF"/><rect x="13" y="6" width="1" height="1" fill="#000000"/><rect x="14" y="6" width="1" height="1" fill="#FFFFFF"/><rect x="15" y="6" width="1" height="1" fill="#000000"/><rect x="0" y="7" width="1" height="1" fill="#000000"/><rect x="1" y="7" width="10" height="1" fill="#FFFFFF"/><rect x="11" y="7" width="1" height="1" fill="#000000"/><rect x="12" y="7" width="1" height="1" fill="#FFFFFF"/><rect x="13" y="7" width="1" height="1" fill="#000000"/><rect x="14" y="7" width="1" height="1" fill="#FFFFFF"/><rect x="15" y="7" width="1" height="1" fill="#000000"/><rect x="0" y="8" width="1" height="1" fill="#000000"/><rect x="1" y="8" width="10" height="1" fill="#FFFFFF"/><rect x="11" y="8" width="1" height="1" fill="#000000"/><rect x="12" y="8" width="1" height="1" fill="#FFFFFF"/><rect x="13" y="8" width="1" height="1" fill="#000000"/><rect x="14" y="8" width="1" height="1" fill="#FFFFFF"/><rect x="15" y="8" width="1" height="1" fill="#000000"/><rect x="0" y="9" width="12" height="1" fill="#000000"/><rect x="12" y="9" width="1" height="1" fill="#FFFFFF"/><rect x="13" y="9" width="1" height="1" fill="#000000"/><rect x="14" y="9" width="1" height="1" fill="#FFFFFF"/><rect x="15" y="9" width="1" height="1" fill="#000000"/><rect x="2" y="10" width="1" height="1" fill="#000000"/><rect x="3" y="10" width="10" height="1" fill="#FFFFFF"/><rect x="13" y="10" width="1" height="1" fill="#000000"/><rect x="14" y="10" width="1" height="1" fill="#FFFFFF"/><rect x="15" y="10" width="1" height="1" fill="#000000"/><rect x="2" y="11" width="12" height="1" fill="#000000"/><rect x="14" y="11" width="1" height="1" fill="#FFFFFF"/><rect x="15" y="11" width="1" height="1" fill="#000000"/><rect x="4" y="12" width="1" height="1" fill="#000000"/><rect x="5" y="12" width="10" height="1" fill="#FFFFFF"/><rect x="15" y="12" width="1" height="1" fill="#000000"/><rect x="4" y="13" width="12" height="1" fill="#000000"/></svg>
<div class="a" style="left:94px;top:261px;font-size:11px;line-height:11px;font-weight:400;letter-spacing:-0.2px;color:#000;">Label Formats</div>
<svg style="left:74px;top:275px" width="16" height="14" viewBox="0 0 16 14" shape-rendering="crispEdges"><rect x="0" y="0" width="12" height="1" fill="#000000"/><rect x="0" y="1" width="1" height="1" fill="#000000"/><rect x="1" y="1" width="2" height="1" fill="#FFFFFF"/><rect x="3" y="1" width="7" height="1" fill="#0000FF"/><rect x="10" y="1" width="1" height="1" fill="#FFFFFF"/><rect x="11" y="1" width="1" height="1" fill="#000000"/><rect x="0" y="2" width="1" height="1" fill="#000000"/><rect x="1" y="2" width="1" height="1" fill="#FFFFFF"/><rect x="2" y="2" width="2" height="1" fill="#0000FF"/><rect x="4" y="2" width="4" height="1" fill="#FFFFFF"/><rect x="8" y="2" width="2" height="1" fill="#0000FF"/><rect x="10" y="2" width="1" height="1" fill="#FFFFFF"/><rect x="11" y="2" width="3" height="1" fill="#000000"/><rect x="0" y="3" width="1" height="1" fill="#000000"/><rect x="1" y="3" width="7" height="1" fill="#FFFFFF"/><rect x="8" y="3" width="2" height="1" fill="#0000FF"/><rect x="10" y="3" width="1" height="1" fill="#FFFFFF"/><rect x="11" y="3" width="1" height="1" fill="#000000"/><rect x="12" y="3" width="1" height="1" fill="#FFFFFF"/><rect x="13" y="3" width="1" height="1" fill="#000000"/><rect x="0" y="4" width="1" height="1" fill="#000000"/><rect x="1" y="4" width="4" height="1" fill="#FFFFFF"/><rect x="5" y="4" width="4" height="1" fill="#0000FF"/><rect x="9" y="4" width="2" height="1" fill="#FFFFFF"/><rect x="11" y="4" width="1" height="1" fill="#000000"/><rect x="12" y="4" width="1" height="1" fill="#FFFFFF"/><rect x="13" y="4" width="3" height="1" fill="#000000"/><rect x="0" y="5" width="1" height="1" fill="#000000"/><rect x="1" y="5" width="4" height="1" fill="#FFFFFF"/><rect x="5" y="5" width="2" height="1" fill="#0000FF"/><rect x="7" y="5" width="4" height="1" fill="#FFFFFF"/><rect x="11" y="5" width="1" height="1" fill="#000000"/><rect x="12" y="5" width="1" height="1" fill="#FFFFFF"/><rect x="13" y="5" width="1" height="1" fill="#000000"/><rect x="14" y="5" width="1" height="1" fill="#FFFFFF"/><rect x="15" y="5" width="1" height="1" fill="#000000"/><rect x="0" y="6" width="1" height="1" fill="#000000"/><rect x="1" y="6" width="10" height="1" fill="#FFFFFF"/><rect x="11" y="6" width="1" height="1" fill="#000000"/><rect x="12" y="6" width="1" height="1" fill="#FFFFFF"/><rect x="13" y="6" width="1" height="1" fill="#000000"/><rect x="14" y="6" width="1" height="1" fill="#FFFFFF"/><rect x="15" y="6" width="1" height="1" fill="#000000"/><rect x="0" y="7" width="1" height="1" fill="#000000"/><rect x="1" y="7" width="4" height="1" fill="#FFFFFF"/><rect x="5" y="7" width="2" height="1" fill="#0000FF"/><rect x="7" y="7" width="4" height="1" fill="#FFFFFF"/><rect x="11" y="7" width="1" height="1" fill="#000000"/><rect x="12" y="7" width="1" height="1" fill="#FFFFFF"/><rect x="13" y="7" width="1" height="1" fill="#000000"/><rect x="14" y="7" width="1" height="1" fill="#FFFFFF"/><rect x="15" y="7" width="1" height="1" fill="#000000"/><rect x="0" y="8" width="1" height="1" fill="#000000"/><rect x="1" y="8" width="4" height="1" fill="#FFFFFF"/><rect x="5" y="8" width="2" height="1" fill="#0000FF"/><rect x="7" y="8" width="4" height="1" fill="#FFFFFF"/><rect x="11" y="8" width="1" height="1" fill="#000000"/><rect x="12" y="8" width="1" height="1" fill="#FFFFFF"/><rect x="13" y="8" width="1" height="1" fill="#000000"/><rect x="14" y="8" width="1" height="1" fill="#FFFFFF"/><rect x="15" y="8" width="1" height="1" fill="#000000"/><rect x="0" y="9" width="12" height="1" fill="#000000"/><rect x="12" y="9" width="1" height="1" fill="#FFFFFF"/><rect x="13" y="9" width="1" height="1" fill="#000000"/><rect x="14" y="9" width="1" height="1" fill="#FFFFFF"/><rect x="15" y="9" width="1" height="1" fill="#000000"/><rect x="2" y="10" width="1" height="1" fill="#000000"/><rect x="3" y="10" width="10" height="1" fill="#FFFFFF"/><rect x="13" y="10" width="1" height="1" fill="#000000"/><rect x="14" y="10" width="1" height="1" fill="#FFFFFF"/><rect x="15" y="10" width="1" height="1" fill="#000000"/><rect x="2" y="11" width="12" height="1" fill="#000000"/><rect x="14" y="11" width="1" height="1" fill="#FFFFFF"/><rect x="15" y="11" width="1" height="1" fill="#000000"/><rect x="4" y="12" width="1" height="1" fill="#000000"/><rect x="5" y="12" width="10" height="1" fill="#FFFFFF"/><rect x="15" y="12" width="1" height="1" fill="#000000"/><rect x="4" y="13" width="12" height="1" fill="#000000"/></svg>
<div class="a" style="left:94px;top:277px;font-size:11px;line-height:11px;font-weight:400;letter-spacing:-0.2px;color:#000;">Queries</div>
<div class="ln" style="left:202px;top:80px;width:12px;height:22px;border:1px solid #A7ADB5;border-radius:2px;background:linear-gradient(#F0F3F7 0%,#E8ECF1 48%,#D3DAE2 56%,#E9EDF2 80%,#EEF1F5 100%)"></div>
<svg style="left:205px;top:88px" width="6" height="8" viewBox="0 0 6 8"><path d="M5.2 0.6L1.2 3.9L5.2 7.2" fill="none" stroke="#22365F" stroke-width="1.1"/></svg>
<div class="ln" style="left:214px;top:80px;width:467px;height:1px;background:#A0A0A0;"></div>
<div class="ln" style="left:214px;top:80px;width:1px;height:319px;background:#A0A0A0;"></div>
<div class="ln" style="left:214px;top:398px;width:467px;height:1px;background:#FFFFFF;"></div>
<div class="ln" style="left:680px;top:80px;width:1px;height:319px;background:#FFFFFF;"></div>
<div class="ln" style="left:215px;top:81px;width:465px;height:1px;background:#696969;"></div>
<div class="ln" style="left:215px;top:81px;width:1px;height:317px;background:#696969;"></div>
<div class="ln" style="left:215px;top:397px;width:465px;height:1px;background:#E3E3E3;"></div>
<div class="ln" style="left:679px;top:81px;width:1px;height:317px;background:#E3E3E3;"></div>
<div class="ln" style="left:216px;top:82px;width:463px;height:315px;background:#FFFFFF;"></div>
<div class="ln" style="left:216px;top:322px;width:39px;height:58px;background:#F0F0F0;"></div>
<div class="ln" style="left:216px;top:82px;width:40px;height:20px;background:#F0F0F0;"></div>
<div class="ln" style="left:216px;top:82px;width:40px;height:1px;background:#FFFFFF;"></div>
<div class="ln" style="left:216px;top:82px;width:1px;height:20px;background:#FFFFFF;"></div>
<div class="ln" style="left:216px;top:101px;width:40px;height:1px;background:#A0A0A0;"></div>
<div class="ln" style="left:255px;top:82px;width:1px;height:20px;background:#A0A0A0;"></div>
<div class="ln" style="left:256px;top:82px;width:76px;height:20px;background:#F0F0F0;"></div>
<div class="ln" style="left:256px;top:82px;width:76px;height:1px;background:#FFFFFF;"></div>
<div class="ln" style="left:256px;top:82px;width:1px;height:20px;background:#FFFFFF;"></div>
<div class="ln" style="left:256px;top:101px;width:76px;height:1px;background:#A0A0A0;"></div>
<div class="ln" style="left:331px;top:82px;width:1px;height:20px;background:#A0A0A0;"></div>
<div class="ln" style="left:332px;top:82px;width:50px;height:20px;background:#F0F0F0;"></div>
<div class="ln" style="left:332px;top:82px;width:50px;height:1px;background:#FFFFFF;"></div>
<div class="ln" style="left:332px;top:82px;width:1px;height:20px;background:#FFFFFF;"></div>
<div class="ln" style="left:332px;top:101px;width:50px;height:1px;background:#A0A0A0;"></div>
<div class="ln" style="left:381px;top:82px;width:1px;height:20px;background:#A0A0A0;"></div>
<div class="ln" style="left:382px;top:82px;width:71px;height:20px;background:#F0F0F0;"></div>
<div class="ln" style="left:382px;top:82px;width:71px;height:1px;background:#FFFFFF;"></div>
<div class="ln" style="left:382px;top:82px;width:1px;height:20px;background:#FFFFFF;"></div>
<div class="ln" style="left:382px;top:101px;width:71px;height:1px;background:#A0A0A0;"></div>
<div class="ln" style="left:452px;top:82px;width:1px;height:20px;background:#A0A0A0;"></div>
<div class="ln" style="left:453px;top:82px;width:226px;height:20px;background:#F0F0F0;"></div>
<div class="ln" style="left:453px;top:82px;width:226px;height:1px;background:#FFFFFF;"></div>
<div class="ln" style="left:453px;top:82px;width:1px;height:20px;background:#FFFFFF;"></div>
<div class="ln" style="left:453px;top:101px;width:226px;height:1px;background:#A0A0A0;"></div>
<div class="a" style="left:260px;top:87px;font-size:11px;line-height:11px;font-weight:700;letter-spacing:0px;color:#000;">AC_HANDLE</div>
<div class="a" style="left:346px;top:87px;font-size:11px;line-height:11px;font-weight:700;letter-spacing:0.3px;color:#000;">GID</div>
<div class="a" style="left:385px;top:87px;font-size:11px;line-height:11px;font-weight:700;letter-spacing:0.6px;color:#000;">BoundType</div>
<div class="a" style="left:545px;top:87px;font-size:11px;line-height:11px;font-weight:700;letter-spacing:0.1px;color:#000;">BoundKey</div>
<div class="ln" style="left:216px;top:102px;width:40px;height:20px;background:#F0F0F0;"></div>
<div class="ln" style="left:216px;top:102px;width:40px;height:1px;background:#FFFFFF;"></div>
<div class="ln" style="left:216px;top:102px;width:1px;height:20px;background:#FFFFFF;"></div>
<div class="ln" style="left:216px;top:121px;width:40px;height:1px;background:#A0A0A0;"></div>
<div class="ln" style="left:255px;top:102px;width:1px;height:20px;background:#A0A0A0;"></div>
<div class="ln" style="left:256px;top:121px;width:423px;height:1px;background:#D8D8D8;"></div>
<div class="ln" style="left:331px;top:102px;width:1px;height:20px;background:#D8D8D8;"></div>
<div class="ln" style="left:381px;top:102px;width:1px;height:20px;background:#D8D8D8;"></div>
<div class="ln" style="left:452px;top:102px;width:1px;height:20px;background:#D8D8D8;"></div>
<div class="a" style="left:229px;top:107px;font-size:11px;line-height:11px;font-weight:700;letter-spacing:0.8px;color:#000;width:14px;text-align:center">1</div>
<div class="a" style="left:259px;top:105px;font-size:11px;line-height:11px;font-weight:400;letter-spacing:0.2px;color:#000;">74</div>
<div class="a" style="left:336px;top:105px;font-size:11px;line-height:11px;font-weight:400;letter-spacing:0.2px;color:#000;">21</div>
<div class="a" style="left:385px;top:105px;font-size:11px;line-height:11px;font-weight:400;letter-spacing:0px;color:#000;transform:scaleX(0.94);transform-origin:0 0">DIST_MUN</div>
<div class="a" style="left:455px;top:105px;font-size:11px;line-height:11px;font-weight:400;letter-spacing:0px;color:#000;transform:scaleX(0.93);transform-origin:0 0">WEST COAST DISTRICT MUNICIPALITY DC1</div>
<div class="ln" style="left:216px;top:122px;width:40px;height:20px;background:#F0F0F0;"></div>
<div class="ln" style="left:216px;top:122px;width:40px;height:1px;background:#FFFFFF;"></div>
<div class="ln" style="left:216px;top:122px;width:1px;height:20px;background:#FFFFFF;"></div>
<div class="ln" style="left:216px;top:141px;width:40px;height:1px;background:#A0A0A0;"></div>
<div class="ln" style="left:255px;top:122px;width:1px;height:20px;background:#A0A0A0;"></div>
<div class="ln" style="left:256px;top:141px;width:423px;height:1px;background:#D8D8D8;"></div>
<div class="ln" style="left:331px;top:122px;width:1px;height:20px;background:#D8D8D8;"></div>
<div class="ln" style="left:381px;top:122px;width:1px;height:20px;background:#D8D8D8;"></div>
<div class="ln" style="left:452px;top:122px;width:1px;height:20px;background:#D8D8D8;"></div>
<div class="a" style="left:229px;top:127px;font-size:11px;line-height:11px;font-weight:700;letter-spacing:0.8px;color:#000;width:14px;text-align:center">2</div>
<div class="a" style="left:259px;top:125px;font-size:11px;line-height:11px;font-weight:400;letter-spacing:0.2px;color:#000;">75</div>
<div class="a" style="left:336px;top:125px;font-size:11px;line-height:11px;font-weight:400;letter-spacing:0.2px;color:#000;">22</div>
<div class="a" style="left:385px;top:125px;font-size:11px;line-height:11px;font-weight:400;letter-spacing:0px;color:#000;transform:scaleX(0.94);transform-origin:0 0">DIST_MUN</div>
<div class="a" style="left:455px;top:125px;font-size:11px;line-height:11px;font-weight:400;letter-spacing:0px;color:#000;transform:scaleX(0.93);transform-origin:0 0">WEST COAST DISTRICT MUNICIPALITY DC1</div>
<div class="ln" style="left:216px;top:142px;width:40px;height:20px;background:#F0F0F0;"></div>
<div class="ln" style="left:216px;top:142px;width:40px;height:1px;background:#FFFFFF;"></div>
<div class="ln" style="left:216px;top:142px;width:1px;height:20px;background:#FFFFFF;"></div>
<div class="ln" style="left:216px;top:161px;width:40px;height:1px;background:#A0A0A0;"></div>
<div class="ln" style="left:255px;top:142px;width:1px;height:20px;background:#A0A0A0;"></div>
<div class="ln" style="left:256px;top:161px;width:423px;height:1px;background:#D8D8D8;"></div>
<div class="ln" style="left:331px;top:142px;width:1px;height:20px;background:#D8D8D8;"></div>
<div class="ln" style="left:381px;top:142px;width:1px;height:20px;background:#D8D8D8;"></div>
<div class="ln" style="left:452px;top:142px;width:1px;height:20px;background:#D8D8D8;"></div>
<div class="a" style="left:229px;top:147px;font-size:11px;line-height:11px;font-weight:700;letter-spacing:0.8px;color:#000;width:14px;text-align:center">3</div>
<div class="a" style="left:259px;top:145px;font-size:11px;line-height:11px;font-weight:400;letter-spacing:0.2px;color:#000;">76</div>
<div class="a" style="left:336px;top:145px;font-size:11px;line-height:11px;font-weight:400;letter-spacing:0.2px;color:#000;">23</div>
<div class="a" style="left:385px;top:145px;font-size:11px;line-height:11px;font-weight:400;letter-spacing:0px;color:#000;transform:scaleX(0.94);transform-origin:0 0">DIST_MUN</div>
<div class="a" style="left:455px;top:145px;font-size:11px;line-height:11px;font-weight:400;letter-spacing:0px;color:#000;transform:scaleX(0.93);transform-origin:0 0">WEST COAST DISTRICT MUNICIPALITY DC1</div>
<div class="ln" style="left:216px;top:162px;width:40px;height:20px;background:#F0F0F0;"></div>
<div class="ln" style="left:216px;top:162px;width:40px;height:1px;background:#FFFFFF;"></div>
<div class="ln" style="left:216px;top:162px;width:1px;height:20px;background:#FFFFFF;"></div>
<div class="ln" style="left:216px;top:181px;width:40px;height:1px;background:#A0A0A0;"></div>
<div class="ln" style="left:255px;top:162px;width:1px;height:20px;background:#A0A0A0;"></div>
<div class="ln" style="left:256px;top:181px;width:423px;height:1px;background:#D8D8D8;"></div>
<div class="ln" style="left:331px;top:162px;width:1px;height:20px;background:#D8D8D8;"></div>
<div class="ln" style="left:381px;top:162px;width:1px;height:20px;background:#D8D8D8;"></div>
<div class="ln" style="left:452px;top:162px;width:1px;height:20px;background:#D8D8D8;"></div>
<div class="a" style="left:229px;top:167px;font-size:11px;line-height:11px;font-weight:700;letter-spacing:0.8px;color:#000;width:14px;text-align:center">4</div>
<div class="a" style="left:259px;top:165px;font-size:11px;line-height:11px;font-weight:400;letter-spacing:0.2px;color:#000;">77</div>
<div class="a" style="left:336px;top:165px;font-size:11px;line-height:11px;font-weight:400;letter-spacing:0.2px;color:#000;">24</div>
<div class="a" style="left:385px;top:165px;font-size:11px;line-height:11px;font-weight:400;letter-spacing:0px;color:#000;transform:scaleX(0.94);transform-origin:0 0">DIST_MUN</div>
<div class="a" style="left:455px;top:165px;font-size:11px;line-height:11px;font-weight:400;letter-spacing:0px;color:#000;transform:scaleX(0.93);transform-origin:0 0">WEST COAST DISTRICT MUNICIPALITY DC1</div>
<div class="ln" style="left:216px;top:182px;width:40px;height:20px;background:#F0F0F0;"></div>
<div class="ln" style="left:216px;top:182px;width:40px;height:1px;background:#FFFFFF;"></div>
<div class="ln" style="left:216px;top:182px;width:1px;height:20px;background:#FFFFFF;"></div>
<div class="ln" style="left:216px;top:201px;width:40px;height:1px;background:#A0A0A0;"></div>
<div class="ln" style="left:255px;top:182px;width:1px;height:20px;background:#A0A0A0;"></div>
<div class="ln" style="left:256px;top:201px;width:423px;height:1px;background:#D8D8D8;"></div>
<div class="ln" style="left:331px;top:182px;width:1px;height:20px;background:#D8D8D8;"></div>
<div class="ln" style="left:381px;top:182px;width:1px;height:20px;background:#D8D8D8;"></div>
<div class="ln" style="left:452px;top:182px;width:1px;height:20px;background:#D8D8D8;"></div>
<div class="a" style="left:229px;top:187px;font-size:11px;line-height:11px;font-weight:700;letter-spacing:0.8px;color:#000;width:14px;text-align:center">5</div>
<div class="a" style="left:259px;top:185px;font-size:11px;line-height:11px;font-weight:400;letter-spacing:0.2px;color:#000;">78</div>
<div class="a" style="left:336px;top:185px;font-size:11px;line-height:11px;font-weight:400;letter-spacing:0.2px;color:#000;">25</div>
<div class="a" style="left:385px;top:185px;font-size:11px;line-height:11px;font-weight:400;letter-spacing:0px;color:#000;transform:scaleX(0.94);transform-origin:0 0">DIST_MUN</div>
<div class="a" style="left:455px;top:185px;font-size:11px;line-height:11px;font-weight:400;letter-spacing:0px;color:#000;transform:scaleX(0.93);transform-origin:0 0">WEST COAST DISTRICT MUNICIPALITY DC1</div>
<div class="ln" style="left:216px;top:202px;width:40px;height:20px;background:#F0F0F0;"></div>
<div class="ln" style="left:216px;top:202px;width:40px;height:1px;background:#FFFFFF;"></div>
<div class="ln" style="left:216px;top:202px;width:1px;height:20px;background:#FFFFFF;"></div>
<div class="ln" style="left:216px;top:221px;width:40px;height:1px;background:#A0A0A0;"></div>
<div class="ln" style="left:255px;top:202px;width:1px;height:20px;background:#A0A0A0;"></div>
<div class="ln" style="left:256px;top:221px;width:423px;height:1px;background:#D8D8D8;"></div>
<div class="ln" style="left:331px;top:202px;width:1px;height:20px;background:#D8D8D8;"></div>
<div class="ln" style="left:381px;top:202px;width:1px;height:20px;background:#D8D8D8;"></div>
<div class="ln" style="left:452px;top:202px;width:1px;height:20px;background:#D8D8D8;"></div>
<div class="a" style="left:229px;top:207px;font-size:11px;line-height:11px;font-weight:700;letter-spacing:0.8px;color:#000;width:14px;text-align:center">6</div>
<div class="a" style="left:259px;top:205px;font-size:11px;line-height:11px;font-weight:400;letter-spacing:0.2px;color:#000;">79</div>
<div class="a" style="left:336px;top:205px;font-size:11px;line-height:11px;font-weight:400;letter-spacing:0.2px;color:#000;">26</div>
<div class="a" style="left:385px;top:205px;font-size:11px;line-height:11px;font-weight:400;letter-spacing:0px;color:#000;transform:scaleX(0.94);transform-origin:0 0">DIST_MUN</div>
<div class="a" style="left:455px;top:205px;font-size:11px;line-height:11px;font-weight:400;letter-spacing:0px;color:#000;transform:scaleX(0.93);transform-origin:0 0">WEST COAST DISTRICT MUNICIPALITY DC1</div>
<div class="ln" style="left:216px;top:222px;width:40px;height:20px;background:#FFFF00;"></div>
<div class="ln" style="left:216px;top:222px;width:40px;height:1px;background:#FFFFFF;"></div>
<div class="ln" style="left:216px;top:222px;width:1px;height:20px;background:#FFFFFF;"></div>
<div class="ln" style="left:216px;top:241px;width:40px;height:1px;background:#A0A0A0;"></div>
<div class="ln" style="left:255px;top:222px;width:1px;height:20px;background:#A0A0A0;"></div>
<div class="ln" style="left:256px;top:222px;width:423px;height:19px;background:#FFFF00;"></div>
<div class="ln" style="left:256px;top:241px;width:423px;height:1px;background:#D8D8D8;"></div>
<div class="ln" style="left:331px;top:222px;width:1px;height:20px;background:#D8D8D8;"></div>
<div class="a" style="left:226px;top:227px;font-size:11.5px;line-height:11.5px;font-weight:700;letter-spacing:0px;color:#000;">7</div>
<div class="a" style="left:238px;top:225px;font-size:14px;line-height:14px;font-weight:700;letter-spacing:0px;color:#000;">*</div>
<div class="a" style="left:259px;top:225px;font-size:11px;line-height:11px;font-weight:400;letter-spacing:0.2px;color:#000;">80</div>
<div class="ln" style="left:216px;top:242px;width:40px;height:20px;background:#FFFF00;"></div>
<div class="ln" style="left:216px;top:242px;width:40px;height:1px;background:#FFFFFF;"></div>
<div class="ln" style="left:216px;top:242px;width:1px;height:20px;background:#FFFFFF;"></div>
<div class="ln" style="left:216px;top:261px;width:40px;height:1px;background:#A0A0A0;"></div>
<div class="ln" style="left:255px;top:242px;width:1px;height:20px;background:#A0A0A0;"></div>
<div class="ln" style="left:256px;top:242px;width:423px;height:19px;background:#FFFF00;"></div>
<div class="ln" style="left:256px;top:261px;width:423px;height:1px;background:#D8D8D8;"></div>
<div class="ln" style="left:331px;top:242px;width:1px;height:20px;background:#D8D8D8;"></div>
<div class="a" style="left:226px;top:247px;font-size:11.5px;line-height:11.5px;font-weight:700;letter-spacing:0px;color:#000;">8</div>
<div class="a" style="left:238px;top:245px;font-size:14px;line-height:14px;font-weight:700;letter-spacing:0px;color:#000;">*</div>
<div class="a" style="left:259px;top:245px;font-size:11px;line-height:11px;font-weight:400;letter-spacing:0.2px;color:#000;">81</div>
<div class="ln" style="left:216px;top:262px;width:40px;height:20px;background:#FFFF00;"></div>
<div class="ln" style="left:216px;top:262px;width:40px;height:1px;background:#FFFFFF;"></div>
<div class="ln" style="left:216px;top:262px;width:1px;height:20px;background:#FFFFFF;"></div>
<div class="ln" style="left:216px;top:281px;width:40px;height:1px;background:#A0A0A0;"></div>
<div class="ln" style="left:255px;top:262px;width:1px;height:20px;background:#A0A0A0;"></div>
<div class="ln" style="left:256px;top:262px;width:423px;height:19px;background:#FFFF00;"></div>
<div class="ln" style="left:256px;top:281px;width:423px;height:1px;background:#D8D8D8;"></div>
<div class="ln" style="left:331px;top:262px;width:1px;height:20px;background:#D8D8D8;"></div>
<div class="a" style="left:226px;top:267px;font-size:11.5px;line-height:11.5px;font-weight:700;letter-spacing:0px;color:#000;">9</div>
<div class="a" style="left:238px;top:265px;font-size:14px;line-height:14px;font-weight:700;letter-spacing:0px;color:#000;">*</div>
<div class="a" style="left:259px;top:265px;font-size:11px;line-height:11px;font-weight:400;letter-spacing:0.2px;color:#000;">82</div>
<div class="ln" style="left:216px;top:282px;width:40px;height:20px;background:#FFFF00;"></div>
<div class="ln" style="left:216px;top:282px;width:40px;height:1px;background:#FFFFFF;"></div>
<div class="ln" style="left:216px;top:282px;width:1px;height:20px;background:#FFFFFF;"></div>
<div class="ln" style="left:216px;top:301px;width:40px;height:1px;background:#A0A0A0;"></div>
<div class="ln" style="left:255px;top:282px;width:1px;height:20px;background:#A0A0A0;"></div>
<div class="ln" style="left:256px;top:282px;width:423px;height:19px;background:#FFFF00;"></div>
<div class="ln" style="left:256px;top:301px;width:423px;height:1px;background:#D8D8D8;"></div>
<div class="ln" style="left:331px;top:282px;width:1px;height:20px;background:#D8D8D8;"></div>
<div class="a" style="left:224px;top:287px;font-size:11.5px;line-height:11.5px;font-weight:700;letter-spacing:0.6px;color:#000;">10</div>
<div class="a" style="left:242px;top:285px;font-size:14px;line-height:14px;font-weight:700;letter-spacing:0px;color:#000;">*</div>
<div class="a" style="left:259px;top:285px;font-size:11px;line-height:11px;font-weight:400;letter-spacing:0.2px;color:#000;">83</div>
<div class="ln" style="left:216px;top:302px;width:40px;height:20px;background:#FFFF00;"></div>
<div class="ln" style="left:216px;top:302px;width:40px;height:1px;background:#FFFFFF;"></div>
<div class="ln" style="left:216px;top:302px;width:1px;height:20px;background:#FFFFFF;"></div>
<div class="ln" style="left:216px;top:321px;width:40px;height:1px;background:#A0A0A0;"></div>
<div class="ln" style="left:255px;top:302px;width:1px;height:20px;background:#A0A0A0;"></div>
<div class="ln" style="left:256px;top:302px;width:423px;height:19px;background:#FFFF00;"></div>
<div class="ln" style="left:256px;top:321px;width:423px;height:1px;background:#D8D8D8;"></div>
<div class="ln" style="left:331px;top:302px;width:1px;height:20px;background:#D8D8D8;"></div>
<div class="a" style="left:224px;top:307px;font-size:11.5px;line-height:11.5px;font-weight:700;letter-spacing:0.6px;color:#000;">11</div>
<div class="a" style="left:242px;top:305px;font-size:14px;line-height:14px;font-weight:700;letter-spacing:0px;color:#000;">*</div>
<div class="a" style="left:259px;top:305px;font-size:11px;line-height:11px;font-weight:400;letter-spacing:0.2px;color:#000;">84</div>
<div class="ln" style="left:256px;top:222px;width:423px;height:19px;border:1px dotted #0000FF"></div>
<div class="ln" style="left:453px;top:222px;width:226px;height:100px;overflow:hidden"><div class="a" style="left:2px;top:3px;font-size:11px;line-height:11px;letter-spacing:0;transform:scaleX(0.93);transform-origin:0 0">CENTRAL KAROO DISTRICT MUNICIPALITY DC5</div><div class="a" style="left:2px;top:23px;font-size:11px;line-height:11px;letter-spacing:0;transform:scaleX(0.93);transform-origin:0 0">EDEN DISTRICT MUNICIPALITY DC4</div><div class="a" style="left:2px;top:43px;font-size:11px;line-height:11px;letter-spacing:0;transform:scaleX(0.93);transform-origin:0 0">WEST COAST DISTRICT MUNICIPALITY DC1</div><div class="a" style="left:-1px;top:63px;font-size:11px;line-height:11px;letter-spacing:0;transform:scaleX(0.93);transform-origin:0 0">OVERBERG DISTRICT MUNICIPALITY DC3</div><div class="a" style="left:1px;top:83px;font-size:11px;line-height:11px;letter-spacing:0;transform:scaleX(0.93);transform-origin:0 0">CAPE WINELANDS DISTRICT MUNICIPALITY DC2</div></div>
<div class="ln" style="left:216px;top:380px;width:463px;height:1px;background:#FFFFFF;"></div>
<div class="ln" style="left:216px;top:381px;width:463px;height:16px;background:#F0F0F0;"></div>
<div class="ln" style="left:233px;top:381px;width:300px;height:15px;background:#CDCDCD;"></div>
<svg style="left:221px;top:385px" width="7" height="7" viewBox="0 0 7 7"><path d="M5.5 0.5L1.5 3.5L5.5 6.5" fill="none" stroke="#606060" stroke-width="2"/></svg>
<svg style="left:667px;top:385px" width="7" height="7" viewBox="0 0 7 7"><path d="M1.5 0.5L5.5 3.5L1.5 6.5" fill="none" stroke="#606060" stroke-width="2"/></svg>
<div class="a" style="left:219px;top:419px;font-size:11.5px;line-height:11.5px;font-weight:400;letter-spacing:-0.55px;color:#000;">Use Label Format.</div>
<div class="ln" style="left:316px;top:410px;width:144px;height:23px;border:1px solid #ABADB3;background:#fff"></div>
<div class="ln" style="left:441px;top:411px;width:17px;height:20px;border:1px solid #97A3AF;border-radius:0 0 3px 3px;background:linear-gradient(#EEF1F4,#E2E6EB)"></div>
<div class="ln" style="left:606px;top:410px;width:75px;height:23px;border:1px solid #8C969F;border-radius:3px;background:#fff"></div>
<div class="ln" style="left:608px;top:412px;width:71px;height:19px;border-radius:1px;background:linear-gradient(#E1E6EC 0%,#DAE0E7 47%,#A3AEBA 47%,#BCC5CF 70%,#DCE1E7 100%)"></div>
<div class="a" style="left:630px;top:417px;font-size:11px;line-height:11px;font-weight:400;letter-spacing:-0.5px;color:#000;">Close</div>
<div class="ln" style="left:303px;top:224px;width:283px;height:203px;background:#F2F2F2;border:1px solid #CCCCCC;box-shadow:2px 2px 3px rgba(0,0,0,0.45)"></div>
<div class="a" style="left:338px;top:232px;font-size:12px;line-height:12px;font-weight:400;letter-spacing:0px;color:#000;">Link this row to an entity</div>
<div class="a" style="left:338px;top:254px;font-size:12px;line-height:12px;font-weight:400;letter-spacing:0px;color:#000;">Link with Label</div>
<div class="a" style="left:338px;top:276px;font-size:12px;line-height:12px;font-weight:400;letter-spacing:0px;color:#000;">Remove link</div>
<div class="ln" style="left:334px;top:296px;width:248px;height:1px;background:#D7D7D7;"></div>
<div class="a" style="left:338px;top:305px;font-size:12px;line-height:12px;font-weight:400;letter-spacing:0px;color:#000;">Label an entity (no link)</div>
<div class="a" style="left:338px;top:327px;font-size:12px;line-height:12px;font-weight:400;letter-spacing:0px;color:#000;">Apply current label format</div>
<div class="ln" style="left:334px;top:347px;width:248px;height:1px;background:#D7D7D7;"></div>
<div class="a" style="left:338px;top:356px;font-size:12px;line-height:12px;font-weight:400;letter-spacing:0px;color:#000;">Show linked entity</div>
<div class="ln" style="left:306px;top:373px;width:276px;height:22px;background:#91C9F7;"></div>
<div class="a" style="left:338px;top:378px;font-size:12px;line-height:12px;font-weight:400;letter-spacing:0px;color:#000;">Select linked entity</div>
<div class="ln" style="left:334px;top:398px;width:248px;height:1px;background:#D7D7D7;"></div>
<div class="a" style="left:338px;top:407px;font-size:12px;line-height:12px;font-weight:400;letter-spacing:0px;color:#000;">Add a new row</div>
</body></html>
